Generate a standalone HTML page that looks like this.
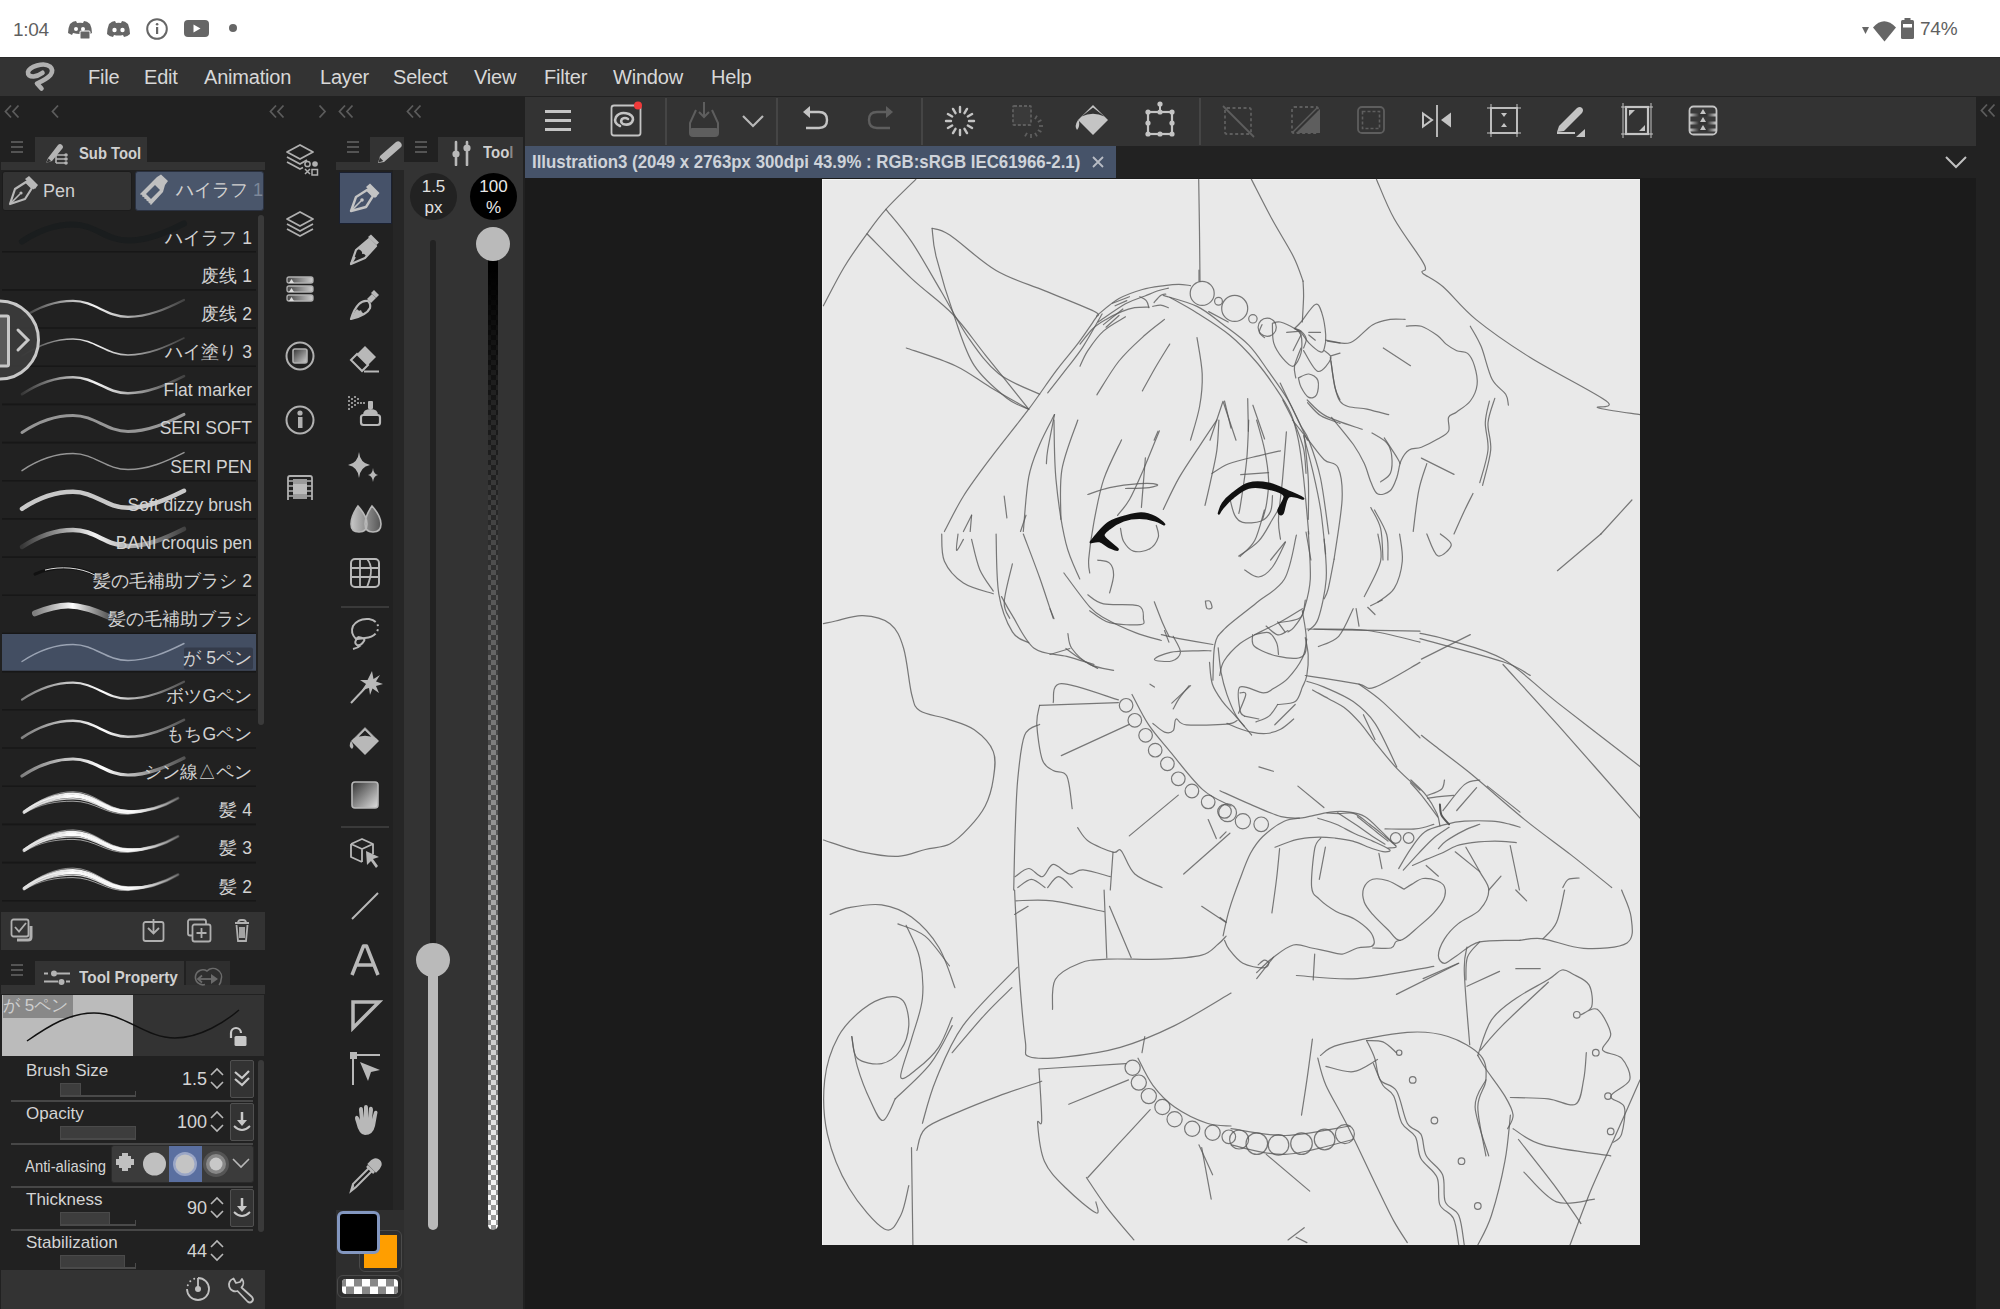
<!DOCTYPE html>
<html><head><meta charset="utf-8">
<style>
*{margin:0;padding:0;box-sizing:border-box}
html,body{width:2000px;height:1309px;overflow:hidden;background:#222;font-family:"Liberation Sans",sans-serif}
.a{position:absolute}
#status{left:0;top:0;width:2000px;height:57px;background:#fff}
#menu{left:0;top:57px;width:2000px;height:39px;background:#333;border-top:1px solid #2a2a2a}
.mi{position:absolute;font-size:20px;line-height:24px;color:#d8d8d8;letter-spacing:-0.2px}
#lp{left:0;top:96px;width:525px;height:1213px;background:#212121}
#canvasarea{left:525px;top:178px;width:1451px;height:1131px;background:#1b1b1b}
#paper{left:822px;top:179px;width:818px;height:1066px;background:#e9e9e9;border-top:1px solid #f3f3f3;border-left:1px solid #f3f3f3}
#toolbar{left:525px;top:97px;width:1451px;height:49px;background:#333}
#tabrow{left:525px;top:146px;width:1451px;height:32px;background:#222}
#tab{left:525px;top:146px;width:591px;height:32px;background:#465369}
#rstrip{left:1976px;top:96px;width:24px;height:1213px;background:#222}
.ic{position:absolute;fill:none;stroke:#b4b4b4;stroke-width:2}
</style></head><body><div class="a" id="status"></div>
<div class="a" id="menu"></div>
<div class="a" id="lp"></div>
<div class="a" id="canvasarea"></div>
<div class="a" id="toolbar"></div>
<div class="a" id="tabrow"></div>
<div class="a" id="tab"></div>
<div class="a" id="rstrip"></div>
<div class="a" id="paper"></div>

<!-- STATUS BAR -->
<div class="a" style="left:13px;top:18px;font-size:19px;color:#5f5f5f;line-height:24px;letter-spacing:-0.3px">1:04</div>
<svg class="a" style="left:66px;top:18px" width="30" height="24" viewBox="0 0 30 24">
 <path d="M4 6 Q7 3 10 3 L11 5 Q14 4.5 17 5 L18 3 Q21 3 24 6 Q26 10 26 15 L22 17 L21 15 Q14 17 7 15 L6 17 L2 15 Q2 10 4 6Z" fill="#666"/>
 <circle cx="10" cy="11" r="2" fill="#fff"/><circle cx="17" cy="11" r="2" fill="#fff"/>
 <rect x="14" y="13" width="10" height="8" rx="1" fill="#666" stroke="#fff" stroke-width="1"/>
</svg>
<svg class="a" style="left:106px;top:20px" width="25" height="19" viewBox="0 0 25 19">
 <path d="M3 4 Q6 1 9 1 L10 3 Q12.5 2.6 15 3 L16 1 Q19 1 22 4 Q24 9 24 14 Q21 17 18 17 L17 15 Q12.5 16 8 15 L7 17 Q4 17 1 14 Q1 9 3 4Z" fill="#666"/>
 <circle cx="8.5" cy="10" r="2.2" fill="#fff"/><circle cx="16.5" cy="10" r="2.2" fill="#fff"/>
</svg>
<svg class="a" style="left:145px;top:17px" width="24" height="24" viewBox="0 0 24 24">
 <circle cx="12" cy="12" r="9.8" fill="none" stroke="#666" stroke-width="2"/>
 <rect x="11" y="10" width="2.2" height="7" fill="#666"/><circle cx="12.1" cy="7.2" r="1.3" fill="#666"/>
</svg>
<svg class="a" style="left:183px;top:19px" width="28" height="20" viewBox="0 0 28 20">
 <rect x="1" y="1" width="25" height="17" rx="4" fill="#666"/><path d="M10.5 5.5 L17.5 9.5 L10.5 13.5Z" fill="#fff"/>
</svg>
<div class="a" style="left:229px;top:24px;width:8px;height:8px;border-radius:50%;background:#666"></div>
<svg class="a" style="left:1860px;top:16px" width="100" height="26" viewBox="0 0 100 26">
 <path d="M2 11 L9 11 L5.5 18Z" fill="#666"/>
 <path d="M13 11.5 Q24 -1 36 11.5 L24.5 25.5Z" fill="#666"/>
 <rect x="41" y="4" width="13" height="19" rx="1.5" fill="#666"/><rect x="44.5" y="2" width="6" height="3" fill="#666"/>
 <rect x="43" y="8" width="9" height="3.5" fill="#fff"/>
</svg>
<div class="a" style="left:1920px;top:17px;font-size:19px;color:#5f5f5f;line-height:24px;letter-spacing:-0.2px">74%</div>

<!-- MENU -->
<svg class="a" style="left:0px;top:40px" width="70" height="60" viewBox="0 40 70 60">
 <path d="M41.5 88.5 L37 83.5 Q 47 79 50.5 75 Q 54 70 50 66.5 Q 45.5 63 37 65.5 Q 29 68 28 72 Q 27.5 76.5 33.5 76.5 Q 38 76 42.5 72.8" fill="none" stroke="#b0b0b0" stroke-width="4.6" stroke-linecap="round" stroke-linejoin="round"/>
</svg>
<div class="mi" style="left:88px;top:65px">File</div>
<div class="mi" style="left:144px;top:65px">Edit</div>
<div class="mi" style="left:204px;top:65px">Animation</div>
<div class="mi" style="left:320px;top:65px">Layer</div>
<div class="mi" style="left:393px;top:65px">Select</div>
<div class="mi" style="left:474px;top:65px">View</div>
<div class="mi" style="left:544px;top:65px">Filter</div>
<div class="mi" style="left:613px;top:65px">Window</div>
<div class="mi" style="left:711px;top:65px">Help</div>
<svg class="a" style="left:3.5px;top:104px" width="18" height="16" viewBox="0 0 18 16"><path d="M7 1.5 L1.5 7.5 L7 13.5 M14.5 1.5 L9 7.5 L14.5 13.5" fill="none" stroke="#5c5c5c" stroke-width="1.8"/></svg>
<svg class="a" style="left:51px;top:104px" width="10" height="16" viewBox="0 0 10 16"><path d="M7 1.5 L1.5 7.5 L7 13.5" fill="none" stroke="#5c5c5c" stroke-width="1.8"/></svg>
<svg class="a" style="left:269px;top:104px" width="18" height="16" viewBox="0 0 18 16"><path d="M7 1.5 L1.5 7.5 L7 13.5 M14.5 1.5 L9 7.5 L14.5 13.5" fill="none" stroke="#5c5c5c" stroke-width="1.8"/></svg>
<svg class="a" style="left:318px;top:104px" width="10" height="16" viewBox="0 0 10 16"><path d="M1.5 1.5 L7 7.5 L1.5 13.5" fill="none" stroke="#5c5c5c" stroke-width="1.8"/></svg>
<svg class="a" style="left:338px;top:104px" width="18" height="16" viewBox="0 0 18 16"><path d="M7 1.5 L1.5 7.5 L7 13.5 M14.5 1.5 L9 7.5 L14.5 13.5" fill="none" stroke="#5c5c5c" stroke-width="1.8"/></svg>
<svg class="a" style="left:406px;top:104px" width="18" height="16" viewBox="0 0 18 16"><path d="M7 1.5 L1.5 7.5 L7 13.5 M14.5 1.5 L9 7.5 L14.5 13.5" fill="none" stroke="#5c5c5c" stroke-width="1.8"/></svg>
<div class="a" style="left:35px;top:137px;width:112px;height:25px;background:#333"></div>
<div class="a" style="left:1px;top:162px;width:264px;height:8px;background:#333"></div>
<svg class="a" style="left:10px;top:140px" width="14" height="14" viewBox="0 0 14 14"><path d="M1 2h12M1 7h12M1 12h12" stroke="#666" stroke-width="1.4"/></svg>
<svg class="a" style="left:44px;top:141px" width="28" height="25" viewBox="0 0 28 25"><path d="M2 22 L4 17 L14 4 Q16 2 18 4 Q20 6 18 8 L8 20Z" fill="#b4b4b4"/><path d="M2 22 L4.5 17.5 L7 20Z" fill="#333"/><path d="M12 14 h10 M12 18 h10 M12 22 h10 M12 14 v8" stroke="#b4b4b4" stroke-width="1.6" fill="none"/><circle cx="22" cy="14" r="1.8" fill="#b4b4b4"/><circle cx="22" cy="18" r="1.8" fill="#b4b4b4"/><circle cx="22" cy="22" r="1.8" fill="#b4b4b4"/></svg>
<div class="a" style="left:79px;top:144px;font-size:17px;font-weight:700;color:#d0d0d0;line-height:20px;transform:scaleX(0.87);transform-origin:left">Sub Tool</div>
<div class="a" style="left:2px;top:171px;width:130px;height:40px;background:#333;border:1px solid #1c1c1c;border-radius:3px"></div>
<div class="a" style="left:135px;top:171px;width:129px;height:40px;background:#4a566b;border:1px solid #2a3140;border-radius:3px"></div>
<svg class="a" style="left:7px;top:175px" width="32.0" height="32.0" viewBox="0 0 32 32"><path d="M3 29 L8 14 L19 7 L25 13 L18 24Z" fill="none" stroke="#b8b8b8" stroke-width="2.2" stroke-linejoin="round"/><path d="M18 4 L22 1 L31 10 L28 14Z" fill="#b8b8b8"/><path d="M19.5 5.5 L27.5 13.5" stroke="#b8b8b8" stroke-width="3"/><path d="M4 28 L13 19" stroke="#b8b8b8" stroke-width="1.6"/><circle cx="14" cy="18" r="1.6" fill="#b8b8b8"/></svg>
<div class="a" style="left:43px;top:180px;font-size:18px;color:#d0d0d0;line-height:22px">Pen</div>
<svg class="a" style="left:137px;top:174px" width="34" height="34" viewBox="0 0 34 34"><path d="M20 3 L24 0.5 L31 7 L28 11 L26 18 L14 31 L3 20 L16 7Z" fill="#c0c0c0"/><path d="M9 20 L18 11 L23 16 L14 25Z" fill="#4a566b"/><path d="M4 21 L13 30" stroke="#4a566b" stroke-width="1.2" stroke-dasharray="1.5 1.5"/></svg>
<div class="a" style="left:176px;top:178px;font-size:18px;color:#d0d0d0;line-height:24px;white-space:nowrap">ハイラフ <span style="color:#7c8799">1</span></div>
<svg class="a" style="left:0;top:0" width="270" height="960" viewBox="0 0 270 960">
<defs><linearGradient id="gw" x1="0" x2="1"><stop offset="0" stop-color="#fff" stop-opacity="0.1"/><stop offset="0.45" stop-color="#fff" stop-opacity="0.95"/><stop offset="1" stop-color="#fff" stop-opacity="0.15"/></linearGradient><linearGradient id="gw2" x1="0" x2="1"><stop offset="0" stop-color="#ddd" stop-opacity="0.5"/><stop offset="0.5" stop-color="#fff" stop-opacity="1"/><stop offset="1" stop-color="#ccc" stop-opacity="0.3"/></linearGradient><linearGradient id="gw3" x1="0" x2="1"><stop offset="0" stop-color="#fff" stop-opacity="0.6"/><stop offset="0.3" stop-color="#fff" stop-opacity="1"/><stop offset="0.7" stop-color="#fff" stop-opacity="0.9"/><stop offset="1" stop-color="#aaa" stop-opacity="0.2"/></linearGradient></defs>
<line x1="2" y1="251.7" x2="256" y2="251.7" stroke="#171717" stroke-width="1.6"/>
<path d="M22 241.5 C 40 229.5, 56 224.5, 73 224.5 C 95 224.5, 106 240.5, 128 240.5 C 148 240.5, 166 232.5, 184 223.5" fill="none" stroke="#1a1d1e" stroke-width="6" stroke-linecap="round"/>
<line x1="2" y1="289.9" x2="256" y2="289.9" stroke="#171717" stroke-width="1.6"/>
<line x1="2" y1="328.0" x2="256" y2="328.0" stroke="#171717" stroke-width="1.6"/>
<path d="M22 317.9 C 40 305.9, 56 300.9, 73 300.9 C 95 300.9, 106 316.9, 128 316.9 C 148 316.9, 166 308.9, 184 299.9" fill="none" stroke="url(#gw)" stroke-width="2.2" stroke-linecap="round"/>
<line x1="2" y1="366.2" x2="256" y2="366.2" stroke="#171717" stroke-width="1.6"/>
<path d="M22 356.0 C 40 344.0, 56 339.0, 73 339.0 C 95 339.0, 106 355.0, 128 355.0 C 148 355.0, 166 347.0, 184 338.0" fill="none" stroke="url(#gw)" stroke-width="1.6" stroke-linecap="round"/>
<line x1="2" y1="404.4" x2="256" y2="404.4" stroke="#171717" stroke-width="1.6"/>
<path d="M22 394.2 C 40 382.2, 56 377.2, 73 377.2 C 95 377.2, 106 393.2, 128 393.2 C 148 393.2, 166 385.2, 184 376.2" fill="none" stroke="url(#gw)" stroke-width="2.6" stroke-linecap="round"/>
<line x1="2" y1="442.6" x2="256" y2="442.6" stroke="#171717" stroke-width="1.6"/>
<path d="M22 432.4 C 40 420.4, 56 415.4, 73 415.4 C 95 415.4, 106 431.4, 128 431.4 C 148 431.4, 166 423.4, 184 414.4" fill="none" stroke="#aaa" stroke-opacity="0.85" stroke-width="3" stroke-linecap="round"/>
<line x1="2" y1="480.8" x2="256" y2="480.8" stroke="#171717" stroke-width="1.6"/>
<path d="M22 470.6 C 40 458.6, 56 453.6, 73 453.6 C 95 453.6, 106 469.6, 128 469.6 C 148 469.6, 166 461.6, 184 452.6" fill="none" stroke="#aaa" stroke-opacity="0.85" stroke-width="1.5" stroke-linecap="round"/>
<line x1="2" y1="518.9" x2="256" y2="518.9" stroke="#171717" stroke-width="1.6"/>
<path d="M22 508.8 C 40 496.8, 56 491.8, 73 491.8 C 95 491.8, 106 507.8, 128 507.8 C 148 507.8, 166 499.8, 184 490.8" fill="none" stroke="#c8c8c8" stroke-width="4.5" stroke-linecap="round"/>
<line x1="2" y1="557.1" x2="256" y2="557.1" stroke="#171717" stroke-width="1.6"/>
<path d="M22 546.9 C 40 534.9, 56 529.9, 73 529.9 C 95 529.9, 106 545.9, 128 545.9 C 148 545.9, 166 537.9, 184 528.9" fill="none" stroke="url(#gw)" stroke-width="4.5" stroke-linecap="round"/>
<line x1="2" y1="595.3" x2="256" y2="595.3" stroke="#171717" stroke-width="1.6"/>
<path d="M35 574.1 C 55 565.1, 80 566.1, 100 577.1" fill="none" stroke="#111" stroke-width="3" stroke-linecap="round"/><path d="M45 570.1 C 60 566.1, 80 567.1, 95 575.1" fill="none" stroke="#ddd" stroke-width="1" />
<line x1="2" y1="633.5" x2="256" y2="633.5" stroke="#171717" stroke-width="1.6"/>
<path d="M35 613.3 C 60 603.3, 75 601.3, 110 617.3" fill="none" stroke="url(#gw2)" stroke-width="6" stroke-linecap="round"/>
<rect x="2" y="634.0" width="254" height="36.7" fill="#434e62"/>
<rect x="184" y="647.5" width="69" height="22" rx="2" fill="#343b4a"/>
<line x1="2" y1="671.7" x2="256" y2="671.7" stroke="#171717" stroke-width="1.6"/>
<path d="M22 661.5 C 40 649.5, 56 644.5, 73 644.5 C 95 644.5, 106 660.5, 128 660.5 C 148 660.5, 166 652.5, 184 643.5" fill="none" stroke="#9aa3b3" stroke-width="1.4" stroke-linecap="round"/>
<line x1="2" y1="709.8" x2="256" y2="709.8" stroke="#171717" stroke-width="1.6"/>
<path d="M22 699.7 C 40 687.7, 56 682.7, 73 682.7 C 95 682.7, 106 698.7, 128 698.7 C 148 698.7, 166 690.7, 184 681.7" fill="none" stroke="url(#gw2)" stroke-width="2.2" stroke-linecap="round"/>
<line x1="2" y1="748.0" x2="256" y2="748.0" stroke="#171717" stroke-width="1.6"/>
<path d="M22 737.8 C 40 725.8, 56 720.8, 73 720.8 C 95 720.8, 106 736.8, 128 736.8 C 148 736.8, 166 728.8, 184 719.8" fill="none" stroke="url(#gw2)" stroke-width="2.6" stroke-linecap="round"/>
<line x1="2" y1="786.2" x2="256" y2="786.2" stroke="#171717" stroke-width="1.6"/>
<path d="M22 776.0 C 40 764.0, 56 759.0, 73 759.0 C 95 759.0, 106 775.0, 128 775.0 C 148 775.0, 166 767.0, 184 758.0" fill="none" stroke="url(#gw2)" stroke-width="3.2" stroke-linecap="round"/>
<line x1="2" y1="824.4" x2="256" y2="824.4" stroke="#171717" stroke-width="1.6"/>
<path d="M24 811.5 C 40 800.0, 56 793.7, 73 793.7 C 95 793.7, 106 810.7, 128 811.2 C 148 812.2, 166 805.2, 178 798.2" fill="none" stroke="url(#gw3)" stroke-opacity="0.95" stroke-width="2.2" stroke-linecap="round"/>
<path d="M24 812.2 C 40 801.2, 56 796.2, 73 796.2 C 95 796.2, 106 812.2, 128 812.2 C 148 812.2, 166 805.2, 178 798.2" fill="none" stroke="url(#gw3)" stroke-opacity="1.0" stroke-width="3.2" stroke-linecap="round"/>
<path d="M24 813.0 C 40 802.5, 56 798.7, 73 798.7 C 95 798.7, 106 813.7, 128 813.2 C 148 812.2, 166 805.2, 178 798.2" fill="none" stroke="url(#gw3)" stroke-opacity="0.8" stroke-width="1.4" stroke-linecap="round"/>
<path d="M24 813.7 C 40 803.7, 56 801.2, 73 801.2 C 95 801.2, 106 815.2, 128 814.2 C 148 812.2, 166 805.2, 178 798.2" fill="none" stroke="url(#gw3)" stroke-opacity="0.6" stroke-width="1.0" stroke-linecap="round"/>
<path d="M24 810.9 C 40 799.0, 56 791.7, 73 791.7 C 95 791.7, 106 809.5, 128 810.4 C 148 812.2, 166 805.2, 178 798.2" fill="none" stroke="url(#gw3)" stroke-opacity="0.5" stroke-width="1.0" stroke-linecap="round"/>
<line x1="2" y1="862.6" x2="256" y2="862.6" stroke="#171717" stroke-width="1.6"/>
<path d="M24 849.6 C 40 838.1, 56 831.9, 73 831.9 C 95 831.9, 106 848.9, 128 849.4 C 148 850.4, 166 843.4, 178 836.4" fill="none" stroke="url(#gw3)" stroke-opacity="0.95" stroke-width="2.2" stroke-linecap="round"/>
<path d="M24 850.4 C 40 839.4, 56 834.4, 73 834.4 C 95 834.4, 106 850.4, 128 850.4 C 148 850.4, 166 843.4, 178 836.4" fill="none" stroke="url(#gw3)" stroke-opacity="1.0" stroke-width="3.2" stroke-linecap="round"/>
<path d="M24 851.1 C 40 840.6, 56 836.9, 73 836.9 C 95 836.9, 106 851.9, 128 851.4 C 148 850.4, 166 843.4, 178 836.4" fill="none" stroke="url(#gw3)" stroke-opacity="0.8" stroke-width="1.4" stroke-linecap="round"/>
<path d="M24 851.9 C 40 841.9, 56 839.4, 73 839.4 C 95 839.4, 106 853.4, 128 852.4 C 148 850.4, 166 843.4, 178 836.4" fill="none" stroke="url(#gw3)" stroke-opacity="0.6" stroke-width="1.0" stroke-linecap="round"/>
<path d="M24 849.0 C 40 837.1, 56 829.9, 73 829.9 C 95 829.9, 106 847.7, 128 848.6 C 148 850.4, 166 843.4, 178 836.4" fill="none" stroke="url(#gw3)" stroke-opacity="0.5" stroke-width="1.0" stroke-linecap="round"/>
<line x1="2" y1="900.7" x2="256" y2="900.7" stroke="#171717" stroke-width="1.6"/>
<path d="M24 887.8 C 40 876.3, 56 870.1, 73 870.1 C 95 870.1, 106 887.1, 128 887.6 C 148 888.6, 166 881.6, 178 874.6" fill="none" stroke="url(#gw3)" stroke-opacity="0.95" stroke-width="2.2" stroke-linecap="round"/>
<path d="M24 888.6 C 40 877.6, 56 872.6, 73 872.6 C 95 872.6, 106 888.6, 128 888.6 C 148 888.6, 166 881.6, 178 874.6" fill="none" stroke="url(#gw3)" stroke-opacity="1.0" stroke-width="3.2" stroke-linecap="round"/>
<path d="M24 889.3 C 40 878.8, 56 875.1, 73 875.1 C 95 875.1, 106 890.1, 128 889.6 C 148 888.6, 166 881.6, 178 874.6" fill="none" stroke="url(#gw3)" stroke-opacity="0.8" stroke-width="1.4" stroke-linecap="round"/>
<path d="M24 890.1 C 40 880.1, 56 877.6, 73 877.6 C 95 877.6, 106 891.6, 128 890.6 C 148 888.6, 166 881.6, 178 874.6" fill="none" stroke="url(#gw3)" stroke-opacity="0.6" stroke-width="1.0" stroke-linecap="round"/>
<path d="M24 887.2 C 40 875.3, 56 868.1, 73 868.1 C 95 868.1, 106 885.9, 128 886.8 C 148 888.6, 166 881.6, 178 874.6" fill="none" stroke="url(#gw3)" stroke-opacity="0.5" stroke-width="1.0" stroke-linecap="round"/>
</svg>
<div class="a" style="left:0;top:226.5px;width:252px;text-align:right;font-size:17.5px;line-height:22px;color:#d2d2d2;white-space:nowrap">ハイラフ 1</div>
<div class="a" style="left:0;top:264.7px;width:252px;text-align:right;font-size:17.5px;line-height:22px;color:#d2d2d2;white-space:nowrap">废线 1</div>
<div class="a" style="left:0;top:302.9px;width:252px;text-align:right;font-size:17.5px;line-height:22px;color:#d2d2d2;white-space:nowrap">废线 2</div>
<div class="a" style="left:0;top:341.0px;width:252px;text-align:right;font-size:17.5px;line-height:22px;color:#d2d2d2;white-space:nowrap">ハイ塗り 3</div>
<div class="a" style="left:0;top:379.2px;width:252px;text-align:right;font-size:17.5px;line-height:22px;color:#d2d2d2;white-space:nowrap">Flat marker</div>
<div class="a" style="left:0;top:417.4px;width:252px;text-align:right;font-size:17.5px;line-height:22px;color:#d2d2d2;white-space:nowrap">SERI SOFT</div>
<div class="a" style="left:0;top:455.6px;width:252px;text-align:right;font-size:17.5px;line-height:22px;color:#d2d2d2;white-space:nowrap">SERI PEN</div>
<div class="a" style="left:0;top:493.8px;width:252px;text-align:right;font-size:17.5px;line-height:22px;color:#d2d2d2;white-space:nowrap">Soft dizzy brush</div>
<div class="a" style="left:0;top:531.9px;width:252px;text-align:right;font-size:17.5px;line-height:22px;color:#d2d2d2;white-space:nowrap">BANI croquis pen</div>
<div class="a" style="left:0;top:570.1px;width:252px;text-align:right;font-size:17.5px;line-height:22px;color:#d2d2d2;white-space:nowrap">髪の毛補助ブラシ 2</div>
<div class="a" style="left:0;top:608.3px;width:252px;text-align:right;font-size:17.5px;line-height:22px;color:#d2d2d2;white-space:nowrap">髪の毛補助ブラシ</div>
<div class="a" style="left:0;top:646.5px;width:252px;text-align:right;font-size:17.5px;line-height:22px;color:#d2d2d2;white-space:nowrap">が 5ペン</div>
<div class="a" style="left:0;top:684.7px;width:252px;text-align:right;font-size:17.5px;line-height:22px;color:#d2d2d2;white-space:nowrap">ボツGペン</div>
<div class="a" style="left:0;top:722.8px;width:252px;text-align:right;font-size:17.5px;line-height:22px;color:#d2d2d2;white-space:nowrap">もちGペン</div>
<div class="a" style="left:0;top:761.0px;width:252px;text-align:right;font-size:17.5px;line-height:22px;color:#d2d2d2;white-space:nowrap">シン線△ペン</div>
<div class="a" style="left:0;top:799.2px;width:252px;text-align:right;font-size:17.5px;line-height:22px;color:#d2d2d2;white-space:nowrap">髪 4</div>
<div class="a" style="left:0;top:837.4px;width:252px;text-align:right;font-size:17.5px;line-height:22px;color:#d2d2d2;white-space:nowrap">髪 3</div>
<div class="a" style="left:0;top:875.6px;width:252px;text-align:right;font-size:17.5px;line-height:22px;color:#d2d2d2;white-space:nowrap">髪 2</div>
<div class="a" style="left:258px;top:215px;width:6px;height:510px;background:#3a3a3a;border-radius:3px"></div>
<svg class="a" style="left:0;top:296px" width="48" height="88" viewBox="0 0 48 88"><circle cx="-0.5" cy="44" r="39" fill="#3c3c3c" fill-opacity="0.9" stroke="#c8c8c8" stroke-width="3"/><rect x="-6" y="20" width="14.5" height="50" rx="1.5" fill="#5a5a5a" stroke="#c8c8c8" stroke-width="3"/><path d="M18 34 L28 44 L18 54" fill="none" stroke="#c8c8c8" stroke-width="3" stroke-linecap="round"/></svg>
<div class="a" style="left:1px;top:912px;width:264px;height:38px;background:#333"></div>
<svg class="a" style="left:10px;top:918px" width="240" height="28" viewBox="0 0 240 28"><rect x="1.5" y="1.5" width="17" height="17" rx="2" fill="none" stroke="#b0b0b0" stroke-width="1.8"/><path d="M5 9 L9 13.5 L16 5" fill="none" stroke="#b0b0b0" stroke-width="1.8"/><path d="M21 8 v11 q0 3 -3 3 h-11" fill="none" stroke="#b0b0b0" stroke-width="3"/><rect x="133.5" y="4" width="20" height="19" rx="2" fill="none" stroke="#b0b0b0" stroke-width="1.8"/><path d="M143.5 1 V15 M138 10 L143.5 15.5 L149 10" fill="none" stroke="#b0b0b0" stroke-width="1.8"/><rect x="178" y="1.5" width="18" height="16" rx="2" fill="none" stroke="#b0b0b0" stroke-width="1.8"/><rect x="182.5" y="6.5" width="18" height="17" rx="2" fill="#333" stroke="#b0b0b0" stroke-width="1.8"/><path d="M191.5 10 v10 M186.5 15 h10" stroke="#b0b0b0" stroke-width="1.8"/><path d="M225 5 h14 M228 5 q0-3 3-3 h2 q3 0 3 3 M226.5 7 L228 23 h8 L237.5 7 M230 9 v11 M232 9 v11 M234 9 v11" fill="none" stroke="#b0b0b0" stroke-width="1.8"/></svg>
<svg class="a" style="left:10px;top:963px" width="14" height="14" viewBox="0 0 14 14"><path d="M1 2h12M1 7h12M1 12h12" stroke="#666" stroke-width="1.4"/></svg>
<div class="a" style="left:35px;top:961px;width:149px;height:24px;background:#333"></div>
<div class="a" style="left:186px;top:961px;width:44px;height:24px;background:#2e2e2e"></div>
<div class="a" style="left:1px;top:985px;width:264px;height:9px;background:#333"></div>
<svg class="a" style="left:42px;top:968px" width="30" height="20" viewBox="0 0 30 20"><path d="M2 5.5 h4 M15 5.5 h13 M2 13.5 h14 M24 13.5 h4" stroke="#b4b4b4" stroke-width="2"/><circle cx="12" cy="5.5" r="3" fill="#b4b4b4"/><circle cx="19.5" cy="14" r="3" fill="#b4b4b4"/></svg>
<div class="a" style="left:79px;top:968px;font-size:17px;font-weight:700;color:#d0d0d0;line-height:20px;transform:scaleX(0.905);transform-origin:left;white-space:nowrap">Tool Property</div>
<svg class="a" style="left:193px;top:966px" width="32" height="22" viewBox="0 0 32 22"><path d="M12 18.5 A7.5 7.5 0 1 1 14 5 A8.5 8.5 0 0 1 28 14 Q28 17 26 19" fill="none" stroke="#6a6a6a" stroke-width="1.6"/><path d="M6 13 H19" stroke="#6a6a6a" stroke-width="1.8"/><path d="M9 9.5 L5 13 L9 16.5" fill="none" stroke="#6a6a6a" stroke-width="1.8"/><path d="M18 8 L25 13 L18 18Z" fill="#6a6a6a"/></svg>
<div class="a" style="left:2px;top:995px;width:131px;height:61px;background:#bbb"></div>
<div class="a" style="left:133px;top:995px;width:131px;height:61px;background:#333"></div>
<div class="a" style="left:3px;top:995px;width:70px;height:23px;background:#888"></div>
<div class="a" style="left:3px;top:995px;font-size:17px;line-height:22px;color:#cfcfcf;white-space:nowrap">が 5ペン</div>
<svg class="a" style="left:0;top:990px" width="265" height="70" viewBox="0 0 265 70"><path d="M27 51 C 50 35, 70 23, 94 23 C 125 23, 145 48, 175 48 C 200 48, 225 32, 239 20" fill="none" stroke="#111" stroke-width="1.5"/></svg>
<svg class="a" style="left:227px;top:1025px" width="26" height="26" viewBox="0 0 26 26"><path d="M4 13 V8 A5 5 0 0 1 14 8" fill="none" stroke="#c8c8c8" stroke-width="2.2"/><rect x="7.5" y="11" width="12" height="10" rx="1.5" fill="#c8c8c8"/></svg>
<div class="a" style="left:26px;top:1061px;font-size:17px;line-height:20px;color:#d4d4d4;white-space:nowrap">Brush Size</div>
<div class="a" style="left:60px;top:1095px;width:76px;height:1.5px;background:#4a4a4a"></div><div class="a" style="left:134.5px;top:1091px;width:1.5px;height:5px;background:#4a4a4a"></div>
<div class="a" style="left:60px;top:1083px;width:21px;height:13px;background:#3d3d3d;border:1px solid #4a4a4a"></div>
<div class="a" style="left:150px;top:1068px;width:57px;text-align:right;font-size:18px;line-height:22px;color:#d4d4d4">1.5</div>
<svg class="a" style="left:209px;top:1067px" width="16" height="24" viewBox="0 0 16 24"><path d="M2 8 L8 2 L14 8 M2 15 L8 21 L14 15" fill="none" stroke="#b8b8b8" stroke-width="1.6"/></svg>
<div class="a" style="left:230px;top:1060px;width:24px;height:38px;background:#333;border:1px solid #505050;border-radius:2px"></div>
<svg class="a" style="left:232px;top:1067px" width="20" height="24" viewBox="0 0 20 24"><path d="M3 5 L10 11 L17 4 M3 12 L10 18 L17 11" fill="none" stroke="#c8c8c8" stroke-width="2.2"/></svg>
<div class="a" style="left:11px;top:1100px;width:242px;height:1.5px;background:#474747"></div>
<div class="a" style="left:26px;top:1104px;font-size:17px;line-height:20px;color:#d4d4d4;white-space:nowrap">Opacity</div>
<div class="a" style="left:60px;top:1138px;width:76px;height:1.5px;background:#4a4a4a"></div><div class="a" style="left:134.5px;top:1134px;width:1.5px;height:5px;background:#4a4a4a"></div>
<div class="a" style="left:60px;top:1126px;width:76px;height:13px;background:#3d3d3d;border:1px solid #4a4a4a"></div>
<div class="a" style="left:150px;top:1111px;width:57px;text-align:right;font-size:18px;line-height:22px;color:#d4d4d4">100</div>
<svg class="a" style="left:209px;top:1110px" width="16" height="24" viewBox="0 0 16 24"><path d="M2 8 L8 2 L14 8 M2 15 L8 21 L14 15" fill="none" stroke="#b8b8b8" stroke-width="1.6"/></svg>
<div class="a" style="left:230px;top:1103px;width:24px;height:38px;background:#333;border:1px solid #505050;border-radius:2px"></div>
<svg class="a" style="left:232px;top:1110px" width="20" height="24" viewBox="0 0 20 24"><path d="M10 2 V13" stroke="#c8c8c8" stroke-width="2.5"/><path d="M5 10 L10 16 L15 10Z" fill="#c8c8c8"/><path d="M2 16 Q10 24 18 16" fill="none" stroke="#c8c8c8" stroke-width="1.8"/></svg>
<div class="a" style="left:11px;top:1143px;width:242px;height:1.5px;background:#474747"></div>
<div class="a" style="left:25px;top:1157px;font-size:17px;line-height:20px;color:#d4d4d4;transform:scaleX(0.875);transform-origin:left;white-space:nowrap">Anti-aliasing</div>
<div class="a" style="left:111px;top:1145px;width:143px;height:38px;background:#3b3b3b;border:1px solid #2a2a2a;border-radius:3px"></div>
<div class="a" style="left:169px;top:1146px;width:33px;height:36px;background:#5a6fa0"></div>
<svg class="a" style="left:111px;top:1145px" width="143" height="38" viewBox="0 0 143 38"><path d="M11 8 h6 v3 h3 v3 h3 v6 h-3 v3 h-3 v3 h-6 v-3 h-3 v-3 h-3 v-6 h3 v-3 h3z" fill="#c0c0c0"/><circle cx="43.5" cy="19" r="11.5" fill="#c0c0c0"/><circle cx="74" cy="19" r="12" fill="#9aa6c6"/><circle cx="74" cy="19" r="9.5" fill="#c4c4c4"/><circle cx="105" cy="19" r="13" fill="#555"/><circle cx="105" cy="19" r="10" fill="#888"/><circle cx="105" cy="19" r="6.5" fill="#c8c8c8"/><path d="M122 14 L130 22 L138 14" fill="none" stroke="#b8b8b8" stroke-width="1.6"/></svg>
<div class="a" style="left:11px;top:1186px;width:242px;height:1.5px;background:#474747"></div>
<div class="a" style="left:26px;top:1190px;font-size:17px;line-height:20px;color:#d4d4d4;white-space:nowrap">Thickness</div>
<div class="a" style="left:60px;top:1224px;width:76px;height:1.5px;background:#4a4a4a"></div><div class="a" style="left:134.5px;top:1220px;width:1.5px;height:5px;background:#4a4a4a"></div>
<div class="a" style="left:60px;top:1212px;width:50px;height:13px;background:#3d3d3d;border:1px solid #4a4a4a"></div>
<div class="a" style="left:150px;top:1197px;width:57px;text-align:right;font-size:18px;line-height:22px;color:#d4d4d4">90</div>
<svg class="a" style="left:209px;top:1196px" width="16" height="24" viewBox="0 0 16 24"><path d="M2 8 L8 2 L14 8 M2 15 L8 21 L14 15" fill="none" stroke="#b8b8b8" stroke-width="1.6"/></svg>
<div class="a" style="left:230px;top:1189px;width:24px;height:38px;background:#333;border:1px solid #505050;border-radius:2px"></div>
<svg class="a" style="left:232px;top:1196px" width="20" height="24" viewBox="0 0 20 24"><path d="M10 2 V13" stroke="#c8c8c8" stroke-width="2.5"/><path d="M5 10 L10 16 L15 10Z" fill="#c8c8c8"/><path d="M2 16 Q10 24 18 16" fill="none" stroke="#c8c8c8" stroke-width="1.8"/></svg>
<div class="a" style="left:11px;top:1229px;width:242px;height:1.5px;background:#474747"></div>
<div class="a" style="left:26px;top:1233px;font-size:17px;line-height:20px;color:#d4d4d4;white-space:nowrap">Stabilization</div>
<div class="a" style="left:60px;top:1267px;width:76px;height:1.5px;background:#4a4a4a"></div><div class="a" style="left:134.5px;top:1263px;width:1.5px;height:5px;background:#4a4a4a"></div>
<div class="a" style="left:60px;top:1255px;width:65px;height:13px;background:#3d3d3d;border:1px solid #4a4a4a"></div>
<div class="a" style="left:150px;top:1240px;width:57px;text-align:right;font-size:18px;line-height:22px;color:#d4d4d4">44</div>
<svg class="a" style="left:209px;top:1239px" width="16" height="24" viewBox="0 0 16 24"><path d="M2 8 L8 2 L14 8 M2 15 L8 21 L14 15" fill="none" stroke="#b8b8b8" stroke-width="1.6"/></svg>
<div class="a" style="left:258px;top:1060px;width:6px;height:172px;background:#3a3a3a;border-radius:3px"></div>
<div class="a" style="left:1px;top:1270px;width:264px;height:39px;background:#333"></div>
<svg class="a" style="left:185px;top:1275px" width="72" height="30" viewBox="0 0 72 30"><path d="M13 3 A11 11 0 1 1 2 14" fill="none" stroke="#c0c0c0" stroke-width="1.8"/><path d="M13 3 V14" stroke="#c0c0c0" stroke-width="1.8"/><circle cx="13" cy="14" r="3" fill="#c0c0c0"/><circle cx="2.8" cy="10.2" r="1" fill="#c0c0c0"/><circle cx="5.3" cy="6.3" r="1" fill="#c0c0c0"/><circle cx="9.2" cy="3.8" r="1" fill="#c0c0c0"/><path d="M48.5 3.5 L51 8 L55 7 L57 4 A6.5 6.5 0 0 1 56.5 12.5 L67 22 Q69 24.5 67 26.5 Q65 28.5 62.5 26.5 L52.5 16 A6.5 6.5 0 0 1 48.5 3.5 Z" fill="none" stroke="#c0c0c0" stroke-width="1.8" stroke-linejoin="round"/></svg>
<svg class="a" style="left:280px;top:140px" width="40" height="360" viewBox="0 0 40 360"><path d="M20 5 L33 12 L20 19 L7 12Z M7 17 L20 24 L27 20 M7 22 L20 29 L23 27.5" fill="none" stroke="#b0b0b0" stroke-width="1.8" stroke-linejoin="round"/><circle cx="27.5" cy="24" r="2.6" fill="none" stroke="#b0b0b0" stroke-width="1.5"/><circle cx="35" cy="24" r="2.8" fill="#b0b0b0"/><path d="M25 29 l5 5 M30 29 l-5 5" stroke="#b0b0b0" stroke-width="1.5"/><rect x="32" y="29.5" width="5.5" height="5.5" fill="none" stroke="#b0b0b0" stroke-width="1.5"/><path d="M20 72 L33 79 L20 86 L7 79Z M7 84 L20 91 L33 84 M7 89 L20 96 L33 89" fill="none" stroke="#b0b0b0" stroke-width="1.8" stroke-linejoin="round"/><defs><linearGradient id="lg1" x1="0" x2="1"><stop offset="0" stop-color="#444"/><stop offset="1" stop-color="#ccc"/></linearGradient><linearGradient id="lg2" x1="0" y1="0" x2="1" y2="1"><stop offset="0" stop-color="#333"/><stop offset="1" stop-color="#d0d0d0"/></linearGradient></defs><rect x="7" y="137" width="26" height="6" rx="2" fill="url(#lg1)" stroke="#b0b0b0" stroke-width="1.3"/><rect x="7" y="146" width="26" height="6" rx="2" fill="url(#lg1)" stroke="#b0b0b0" stroke-width="1.3"/><rect x="7" y="155" width="26" height="6" rx="2" fill="url(#lg1)" stroke="#b0b0b0" stroke-width="1.3"/><path d="M9 143 l2.5-4 l2.5 4z M9 152 l2.5-4 l2.5 4z M9 161 l2.5-4 l2.5 4z" fill="#ddd"/><circle cx="20" cy="216" r="13.5" fill="none" stroke="#b0b0b0" stroke-width="2"/><rect x="13" y="209" width="14" height="14" rx="2" fill="url(#lg2)" stroke="#b0b0b0" stroke-width="1.6"/><circle cx="20" cy="280" r="13.5" fill="none" stroke="#b0b0b0" stroke-width="2"/><circle cx="20" cy="273" r="2.6" fill="#b0b0b0"/><rect x="18" y="277" width="4.5" height="11" fill="#b0b0b0"/><rect x="8" y="336" width="24" height="26" rx="2" fill="none" stroke="#b0b0b0" stroke-width="1.8"/><rect x="13" y="339" width="14" height="20" fill="#9a9a9a"/><rect x="13" y="344" width="14" height="10" fill="#bbb"/><path d="M8 341 h5 M8 346 h5 M8 351 h5 M8 356 h5 M27 341 h5 M27 346 h5 M27 351 h5 M27 356 h5" stroke="#b0b0b0" stroke-width="1.3"/></svg>
<div class="a" style="left:336px;top:170px;width:57px;height:1040px;background:#212121"></div>
<div class="a" style="left:393px;top:170px;width:11px;height:1040px;background:#262626"></div>
<svg class="a" style="left:346px;top:140px" width="14" height="14" viewBox="0 0 14 14"><path d="M1 2h12M1 7h12M1 12h12" stroke="#666" stroke-width="1.4"/></svg>
<div class="a" style="left:370px;top:137px;width:34px;height:25px;background:#333"></div>
<div class="a" style="left:336px;top:162px;width:68px;height:8px;background:#333"></div>
<svg class="a" style="left:376px;top:141px" width="28" height="24" viewBox="0 0 28 24"><path d="M2 22 L4 15 L20 1 Q23 -1 25 2 Q27 5 24 7 L8 21Z" fill="#b8b8b8"/><path d="M2.5 21.5 L3.8 16.5 L7.3 20Z" fill="#333"/></svg>
<div class="a" style="left:339px;top:172px;width:53px;height:52px;background:#465269;border:1px solid #1a2030"></div>
<svg class="a" style="left:345px;top:178px" width="40" height="40" viewBox="0 0 40 40"><path d="M6 33 L11 19 L22 12 L28 18 L21 29Z" fill="none" stroke="#c4c4c4" stroke-width="2.4" stroke-linejoin="round"/><path d="M21 9 L25 5.5 L34.5 15 L31 19Z" fill="#c4c4c4"/><path d="M22.5 10.5 L31 19" stroke="#c4c4c4" stroke-width="3"/><path d="M7 32 L16 23" stroke="#c4c4c4" stroke-width="1.6"/><circle cx="17" cy="22" r="1.8" fill="#c4c4c4"/></svg>
<svg class="a" style="left:345px;top:230px" width="40" height="40" viewBox="0 0 40 40"><path d="M6 34 L11 20 L24 9 L31 16 L20 28Z" fill="none" stroke="#b8b8b8" stroke-width="2.2" stroke-linejoin="round"/><path d="M13 19 L24 9 L31 16 L21 26 Q19 23 17 24 Q18 21 13 19Z" fill="#b8b8b8"/><path d="M23 7 L26 4.5 L34 12.5 L31.5 15Z" fill="#b8b8b8"/><path d="M6 34 L10 27" stroke="#b8b8b8" stroke-width="2"/></svg>
<svg class="a" style="left:345px;top:285px" width="40" height="40" viewBox="0 0 40 40"><path d="M6 34 Q9 24 14 19 Q18 15 23 16 Q26 19 25 23 Q22 30 6 34Z" fill="none" stroke="#b8b8b8" stroke-width="2.2" stroke-linejoin="round"/><path d="M6 34 Q9 27 12 24 Q14 27 16 25 Q17 29 19 28 Q14 32 6 34Z" fill="#b8b8b8"/><path d="M22 14 L27 9 L31 13 L26 18Z" fill="#b8b8b8"/><path d="M26 8 L29 5 L34 10 L31 13Z" fill="#b8b8b8"/></svg>
<svg class="a" style="left:343px;top:336px" width="40" height="40" viewBox="0 0 40 40"><path d="M8 24 L22 10 L33 21 L19 35Z" fill="#b8b8b8"/><path d="M8 24 L14 18 L25 29 L19 35Z" fill="#212121" stroke="#b8b8b8" stroke-width="2"/><path d="M21 35.5 H36" stroke="#b8b8b8" stroke-width="2"/></svg>
<svg class="a" style="left:344px;top:390px" width="40" height="40" viewBox="0 0 40 40"><rect x="17" y="25" width="19" height="10" rx="2.5" fill="none" stroke="#b8b8b8" stroke-width="2.2"/><path d="M19 25 Q19 19 26.5 19 Q34 19 34 25" fill="#b8b8b8"/><rect x="24" y="11" width="5" height="8" rx="1" fill="#b8b8b8"/><g fill="#b8b8b8"><circle cx="5" cy="7" r="1"/><circle cx="8" cy="9" r="1"/><circle cx="11" cy="11" r="1"/><circle cx="5" cy="11" r="1"/><circle cx="8" cy="13" r="1"/><circle cx="14" cy="13" r="1"/><circle cx="5" cy="15" r="1"/><circle cx="8" cy="17" r="1"/><circle cx="11" cy="15" r="1"/><circle cx="14" cy="9" r="1"/><circle cx="17" cy="13" r="1"/><circle cx="11" cy="7" r="1"/><circle cx="5" cy="19" r="1"/><circle cx="20" cy="13" r="1"/></g></svg>
<svg class="a" style="left:345px;top:446px" width="40" height="40" viewBox="0 0 40 40"><path d="M14 6 Q15 17 25 19 Q15 21 14 32 Q13 21 3 19 Q13 17 14 6Z" fill="#b8b8b8"/><path d="M28 22 Q28.5 28 33 29 Q28.5 30 28 36 Q27.5 30 23 29 Q27.5 28 28 22Z" fill="#b8b8b8"/></svg>
<svg class="a" style="left:345px;top:499px" width="40" height="40" viewBox="0 0 40 40"><defs><linearGradient id="bl" x1="0" x2="1"><stop offset="0" stop-color="#c8c8c8"/><stop offset="1" stop-color="#555"/></linearGradient></defs><path d="M13 7 Q22 17 22 25 Q22 33 14 33 Q6 33 6 25 Q6 17 13 7Z M27 7 Q36 17 36 25 Q36 33 28 33 Q20 33 20 25 Q20 17 27 7Z" fill="url(#bl)" stroke="#b8b8b8" stroke-width="1.6"/></svg>
<svg class="a" style="left:345px;top:553px" width="40" height="40" viewBox="0 0 40 40"><rect x="6" y="6" width="28" height="28" rx="4" fill="none" stroke="#b8b8b8" stroke-width="2"/><path d="M6 15 H34 M6 24 H34 M15 6 V34 M22 6 Q30 15 22 34" fill="none" stroke="#b8b8b8" stroke-width="1.8"/></svg>
<div class="a" style="left:341px;top:606px;width:48px;height:2px;background:#3a3a3a"></div>
<svg class="a" style="left:345px;top:613px" width="40" height="40" viewBox="0 0 40 40"><path d="M11 26 Q5 20 8 13 Q13 5 24 6 Q34 8 33 16 Q31 24 20 25 Q13 26 11 26" fill="none" stroke="#b8b8b8" stroke-width="2" stroke-dasharray="40 3 2 3 2 3"/><path d="M13 24 Q8 30 12 32 Q16 33 19 28 Q21 25 13 24 M8 36 Q13 35 16 32" fill="none" stroke="#b8b8b8" stroke-width="2"/></svg>
<svg class="a" style="left:345px;top:667px" width="40" height="40" viewBox="0 0 40 40"><path d="M6 36 L22 19" stroke="#b8b8b8" stroke-width="2"/><path d="M27 4 L28.5 12 L35 8 L31 14.5 L38 17 L31 19 L34 26 L27.5 21.5 L25 28 L24 21 L17 23 L21 17 L15 13 L22.5 13 Z" fill="#b8b8b8"/></svg>
<svg class="a" style="left:345px;top:721px" width="40" height="40" viewBox="0 0 40 40"><path d="M20 6 L34 20 L20 34 L6 20Z" fill="#b8b8b8"/><path d="M8.5 17.5 Q20 11 31.5 17.5 L20 6Z" fill="#212121"/><path d="M20 8 L30.5 18.5 Q20 13 9.5 18.5Z" fill="#212121" stroke="#b8b8b8" stroke-width="2"/><path d="M6 20 Q3 25 7 28 Q10 25 6 20" fill="#b8b8b8"/></svg>
<svg class="a" style="left:345px;top:775px" width="40" height="40" viewBox="0 0 40 40"><defs><linearGradient id="gr" x1="0" y1="0" x2="1" y2="1"><stop offset="0" stop-color="#333"/><stop offset="1" stop-color="#e0e0e0"/></linearGradient></defs><rect x="7" y="7" width="26" height="26" rx="3" fill="url(#gr)" stroke="#b8b8b8" stroke-width="1.6"/></svg>
<div class="a" style="left:341px;top:826px;width:48px;height:2px;background:#3a3a3a"></div>
<svg class="a" style="left:345px;top:832px" width="40" height="40" viewBox="0 0 40 40"><path d="M6 12 L17 7 L28 12 L28 22 M6 12 L6 25 L17 30 M6 12 L17 17 L28 12 M17 17 V30" fill="none" stroke="#b8b8b8" stroke-width="1.8" stroke-linejoin="round"/><path d="M21 19 L34 25 L28 27 L33 34 L31 36 L26 29 L22 33Z" fill="#b8b8b8"/></svg>
<svg class="a" style="left:345px;top:886px" width="40" height="40" viewBox="0 0 40 40"><path d="M7 33 L33 7" stroke="#b8b8b8" stroke-width="2"/></svg>
<svg class="a" style="left:345px;top:941px" width="40" height="40" viewBox="0 0 40 40"><path d="M7 34 L18.5 5 L21.5 5 L33 34 M11.5 24 H28.5" fill="none" stroke="#b8b8b8" stroke-width="3.5" stroke-linejoin="round"/></svg>
<svg class="a" style="left:345px;top:994px" width="40" height="40" viewBox="0 0 40 40"><path d="M8 34 L8 8 L34 8Z" fill="none" stroke="#b8b8b8" stroke-width="3.5" stroke-linejoin="miter"/></svg>
<svg class="a" style="left:345px;top:1048px" width="40" height="40" viewBox="0 0 40 40"><path d="M8 37 V7 M8 7 H35" stroke="#b8b8b8" stroke-width="2"/><rect x="5" y="4" width="7" height="7" fill="#b8b8b8"/><path d="M15 14 L35 22 L26 24 L23 33Z" fill="#b8b8b8"/></svg>
<svg class="a" style="left:345px;top:1101px" width="40" height="40" viewBox="0 0 40 40"><path d="M11 21 Q9 16 11 15 Q13 14 15 19 L14 9 Q14 6 16 6 Q18 6 18 9 L19 17 L19 6 Q19 4 21 4 Q23 4 23 7 L23 17 L24 7 Q25 5 27 6 Q28 7 28 9 L27 18 L29 11 Q30 9 32 10 Q33 11 32 14 L30 25 Q28 34 20 34 Q14 34 11 21Z" fill="#b8b8b8"/></svg>
<svg class="a" style="left:345px;top:1155px" width="40" height="40" viewBox="0 0 40 40"><path d="M6 36 L8 29 L24 13 L27 16 L11 32Z" fill="none" stroke="#b8b8b8" stroke-width="2"/><path d="M8 29 L9 33" stroke="#b8b8b8"/><path d="M22 11 L29 18 M24 9 Q30 2 34 6 Q38 10 31 16Z" fill="#b8b8b8" stroke="#b8b8b8" stroke-width="2.5"/></svg>
<div class="a" style="left:336px;top:1210px;width:68px;height:99px;background:#2e2e2e"></div>
<div class="a" style="left:359px;top:1230px;width:43px;height:42px;border:1.5px solid #4a4a4a;border-radius:6px;background:#2e2e2e"></div>
<div class="a" style="left:364px;top:1235px;width:33px;height:33px;background:#ff9e00"></div>
<div class="a" style="left:337px;top:1211px;width:43px;height:43px;border:3px solid #8397c0;border-radius:6px;background:#000"></div>
<div class="a" style="left:337px;top:1275px;width:65px;height:23px;border:1.5px solid #4a4a4a;border-radius:6px;background:#2e2e2e"></div>
<svg class="a" style="left:342px;top:1279px" width="56" height="15" viewBox="0 0 56 15"><defs><clipPath id="ckc"><rect x="0" y="0" width="56" height="15" rx="4"/></clipPath></defs><g clip-path="url(#ckc)"><rect x="0" y="0" width="56" height="15" fill="#fff"/><g fill="#888"><rect x="0" y="0" width="4" height="7.5"/><rect x="12" y="0" width="8" height="7.5"/><rect x="28" y="0" width="8" height="7.5"/><rect x="44" y="0" width="8" height="7.5"/><rect x="4" y="7.5" width="8" height="7.5"/><rect x="20" y="7.5" width="8" height="7.5"/><rect x="36" y="7.5" width="8" height="7.5"/><rect x="52" y="7.5" width="4" height="7.5"/></g></g></svg>
<div class="a" style="left:404px;top:162px;width:119px;height:1147px;background:#333"></div>
<svg class="a" style="left:414px;top:140px" width="14" height="14" viewBox="0 0 14 14"><path d="M1 2h12M1 7h12M1 12h12" stroke="#666" stroke-width="1.4"/></svg>
<div class="a" style="left:438px;top:137px;width:85px;height:25px;background:#333"></div>
<svg class="a" style="left:450px;top:140px" width="24" height="26" viewBox="0 0 24 26"><path d="M6 2 V10 M6 18 V25 M17 2 V4 M17 12 V25" stroke="#b8b8b8" stroke-width="2.6" stroke-linecap="round"/><circle cx="6" cy="14" r="3.6" fill="#b8b8b8"/><circle cx="17" cy="8" r="3.6" fill="#b8b8b8"/></svg>
<div class="a" style="left:483px;top:143px;font-size:17px;font-weight:700;color:#d0d0d0;line-height:20px;transform:scaleX(0.88);transform-origin:left;white-space:nowrap">Too<span style="color:#888">l</span></div>
<div class="a" style="left:410px;top:173px;width:47px;height:47px;border-radius:50%;background:#222"></div>
<div class="a" style="left:410px;top:176px;width:47px;text-align:center;font-size:17px;line-height:21px;color:#e0e0e0">1.5<br>px</div>
<div class="a" style="left:470px;top:173px;width:47px;height:47px;border-radius:50%;background:#000"></div>
<div class="a" style="left:470px;top:176px;width:47px;text-align:center;font-size:17px;line-height:21px;color:#e8e8e8">100<br>%</div>
<div class="a" style="left:430px;top:240px;width:6px;height:725px;background:#222;border-radius:3px"></div>
<div class="a" style="left:428px;top:960px;width:10px;height:270px;background:#bababa;border-radius:5px"></div>
<div class="a" style="left:416px;top:943px;width:34px;height:34px;border-radius:50%;background:#bababa"></div>
<svg class="a" style="left:486px;top:240px" width="14" height="992" viewBox="0 0 14 992"><defs><pattern id="ck" width="10" height="10" patternUnits="userSpaceOnUse"><rect width="10" height="10" fill="#fff"/><rect width="5" height="5" fill="#9a9a9a"/><rect x="5" y="5" width="5" height="5" fill="#9a9a9a"/></pattern><linearGradient id="fade" x1="0" y1="0" x2="0" y2="1"><stop offset="0" stop-color="#000" stop-opacity="1"/><stop offset="0.03" stop-color="#000" stop-opacity="1"/><stop offset="1" stop-color="#000" stop-opacity="0"/></linearGradient><clipPath id="rc"><rect x="2" y="0" width="10" height="990" rx="5"/></clipPath></defs><g clip-path="url(#rc)"><rect x="2" y="0" width="10" height="990" fill="url(#ck)"/><rect x="2" y="0" width="10" height="990" fill="url(#fade)"/></g></svg>
<div class="a" style="left:476px;top:227px;width:34px;height:34px;border-radius:50%;background:#bababa"></div>
<div class="a" style="left:665px;top:98px;width:1.5px;height:47px;background:#454545"></div>
<div class="a" style="left:776px;top:98px;width:1.5px;height:47px;background:#454545"></div>
<div class="a" style="left:921px;top:98px;width:1.5px;height:47px;background:#454545"></div>
<div class="a" style="left:1199px;top:98px;width:1.5px;height:47px;background:#454545"></div>
<svg class="a" style="left:536.0px;top:99.0px" width="44" height="44" viewBox="0 0 44 44"><path d="M9 12.5 H35 M9 21.5 H35 M9 30.5 H35" stroke="#c4c4c4" stroke-width="3.2"/></svg>
<svg class="a" style="left:603.0px;top:99.0px" width="44" height="44" viewBox="0 0 44 44"><rect x="8.5" y="6.5" width="29" height="30" rx="2.5" fill="none" stroke="#c4c4c4" stroke-width="1.8"/><path d="M17 27 Q10 24 13 18 Q17 12 26 15 Q32 18 29 23 Q26 27 20 25 Q17 23 19 20 Q22 18 25 20" fill="none" stroke="#c4c4c4" stroke-width="2.6" stroke-linecap="round"/><circle cx="35" cy="6.5" r="4" fill="#f03a3a"/></svg>
<svg class="a" style="left:682.0px;top:99.0px" width="44" height="44" viewBox="0 0 44 44"><path d="M22 3 V18 M17 13 L22 18 L27 13" fill="none" stroke="#5e5e5e" stroke-width="2"/><path d="M14 11 L8 24 V34 Q8 37 11 37 H33 Q36 37 36 34 V24 L30 11" fill="none" stroke="#5e5e5e" stroke-width="2"/><rect x="8" y="29" width="28" height="8" rx="2" fill="#5e5e5e"/></svg>
<svg class="a" style="left:731.0px;top:99.0px" width="44" height="44" viewBox="0 0 44 44"><path d="M12 17 L22 27 L32 17" fill="none" stroke="#b8b8b8" stroke-width="2.2"/></svg>
<svg class="a" style="left:793.0px;top:99.0px" width="44" height="44" viewBox="0 0 44 44"><path d="M10 13 L17 7 L17 19Z" fill="#c4c4c4"/><path d="M16 13 H26 Q34 13 34 21 Q34 29 26 29 H13" fill="none" stroke="#c4c4c4" stroke-width="2.4"/></svg>
<svg class="a" style="left:859.0px;top:99.0px" width="44" height="44" viewBox="0 0 44 44"><path d="M34 13 L27 7 L27 19Z" fill="#5e5e5e"/><path d="M28 13 H18 Q10 13 10 21 Q10 29 18 29 H31" fill="none" stroke="#5e5e5e" stroke-width="2.4"/></svg>
<svg class="a" style="left:938.0px;top:99.0px" width="44" height="44" viewBox="0 0 44 44"><path d="M31.0 22.0 L36.0 22.0" stroke="#c4c4c4" stroke-width="2.4" stroke-linecap="round"/><path d="M29.8 26.5 L34.1 29.0" stroke="#c4c4c4" stroke-width="2.4" stroke-linecap="round"/><path d="M26.5 29.8 L29.0 34.1" stroke="#c4c4c4" stroke-width="2.4" stroke-linecap="round"/><path d="M22.0 31.0 L22.0 36.0" stroke="#c4c4c4" stroke-width="2.4" stroke-linecap="round"/><path d="M17.5 29.8 L15.0 34.1" stroke="#c4c4c4" stroke-width="2.4" stroke-linecap="round"/><path d="M14.2 26.5 L9.9 29.0" stroke="#c4c4c4" stroke-width="2.4" stroke-linecap="round"/><path d="M13.0 22.0 L8.0 22.0" stroke="#c4c4c4" stroke-width="2.4" stroke-linecap="round"/><path d="M14.2 17.5 L9.9 15.0" stroke="#c4c4c4" stroke-width="2.4" stroke-linecap="round"/><path d="M17.5 14.2 L15.0 9.9" stroke="#c4c4c4" stroke-width="2.4" stroke-linecap="round"/><path d="M22.0 13.0 L22.0 8.0" stroke="#c4c4c4" stroke-width="2.4" stroke-linecap="round"/><path d="M26.5 14.2 L29.0 9.9" stroke="#c4c4c4" stroke-width="2.4" stroke-linecap="round"/><path d="M29.8 17.5 L34.1 15.0" stroke="#c4c4c4" stroke-width="2.4" stroke-linecap="round"/></svg>
<svg class="a" style="left:1005.0px;top:99.0px" width="44" height="44" viewBox="0 0 44 44"><rect x="8" y="7" width="18" height="19" rx="1" fill="#3a3a3a" stroke="#5e5e5e" stroke-width="1.8" stroke-dasharray="3 2"/><path d="M30.0 20.1 L32.0 16.6" stroke="#5e5e5e" stroke-width="1.8"/><path d="M32.9 23.0 L36.4 21.0" stroke="#5e5e5e" stroke-width="1.8"/><path d="M34.0 27.0 L38.0 27.0" stroke="#5e5e5e" stroke-width="1.8"/><path d="M32.9 31.0 L36.4 33.0" stroke="#5e5e5e" stroke-width="1.8"/><path d="M30.0 33.9 L32.0 37.4" stroke="#5e5e5e" stroke-width="1.8"/><path d="M26.0 35.0 L26.0 39.0" stroke="#5e5e5e" stroke-width="1.8"/><path d="M22.0 33.9 L20.0 37.4" stroke="#5e5e5e" stroke-width="1.8"/></svg>
<svg class="a" style="left:1071.0px;top:99.0px" width="44" height="44" viewBox="0 0 44 44"><path d="M22 6 L37 21 L22 36 L7 21Z" fill="#c4c4c4"/><path d="M10.5 17.5 Q22 12 33.5 17.5 L22 8.5Z" fill="#333"/><path d="M7 21 Q3 27 6 31 Q9 28 8 22" fill="#c4c4c4"/></svg>
<svg class="a" style="left:1138.0px;top:99.0px" width="44" height="44" viewBox="0 0 44 44"><rect x="10" y="13" width="24" height="22" fill="none" stroke="#c4c4c4" stroke-width="2.2"/><path d="M22 13 V5" stroke="#c4c4c4" stroke-width="2"/><circle cx="10" cy="13" r="2.6" fill="#c4c4c4"/><circle cx="22" cy="13" r="2.6" fill="#c4c4c4"/><circle cx="34" cy="13" r="2.6" fill="#c4c4c4"/><circle cx="10" cy="24" r="2.6" fill="#c4c4c4"/><circle cx="34" cy="24" r="2.6" fill="#c4c4c4"/><circle cx="10" cy="35" r="2.6" fill="#c4c4c4"/><circle cx="22" cy="35" r="2.6" fill="#c4c4c4"/><circle cx="34" cy="35" r="2.6" fill="#c4c4c4"/><circle cx="22" cy="5" r="2.6" fill="#c4c4c4"/></svg>
<svg class="a" style="left:1216.0px;top:99.0px" width="44" height="44" viewBox="0 0 44 44"><rect x="9" y="9" width="26" height="26" rx="2" fill="none" stroke="#5e5e5e" stroke-width="1.8" stroke-dasharray="3 2.5"/><path d="M7 7 L38 38" stroke="#5e5e5e" stroke-width="1.8"/></svg>
<svg class="a" style="left:1283.0px;top:99.0px" width="44" height="44" viewBox="0 0 44 44"><rect x="9" y="8" width="26" height="26" rx="2" fill="none" stroke="#5e5e5e" stroke-width="1.8" stroke-dasharray="3 2.5"/><path d="M37 10 L13 34 H37Z" fill="#5e5e5e"/><path d="M35 8 L9 34" stroke="#5e5e5e" stroke-width="1.5"/></svg>
<svg class="a" style="left:1349.0px;top:99.0px" width="44" height="44" viewBox="0 0 44 44"><rect x="9" y="8" width="26" height="26" rx="4" fill="none" stroke="#5e5e5e" stroke-width="1.8"/><rect x="13.5" y="12.5" width="17" height="17" fill="none" stroke="#5e5e5e" stroke-width="1.6" stroke-dasharray="3 2"/></svg>
<svg class="a" style="left:1415.0px;top:99.0px" width="44" height="44" viewBox="0 0 44 44"><path d="M22 6 V38" stroke="#c4c4c4" stroke-width="1.8"/><path d="M8 14.5 L17 21 L8 27.5Z" fill="none" stroke="#c4c4c4" stroke-width="2"/><path d="M36 13.5 L26 21 L36 28.5Z" fill="#c4c4c4"/></svg>
<svg class="a" style="left:1482.0px;top:99.0px" width="44" height="44" viewBox="0 0 44 44"><rect x="9" y="9" width="26" height="25" fill="none" stroke="#c4c4c4" stroke-width="1.8"/><path d="M5 9 H39 M5 34 H39 M9 5 V38 M35 5 V38" stroke="#c4c4c4" stroke-width="1"/><path d="M19 14 h6 l-3 4z M19 28 h6 l-3 -4z" fill="#c4c4c4"/></svg>
<svg class="a" style="left:1549.0px;top:99.0px" width="44" height="44" viewBox="0 0 44 44"><path d="M8 33 L10 27 L28 9 Q31 7 33 9 Q35 11 33 14 L15 32Z" fill="#c4c4c4"/><path d="M8 34 H26" stroke="#c4c4c4" stroke-width="2"/><path d="M27 38 L36 30 V38Z" fill="#c4c4c4"/></svg>
<svg class="a" style="left:1615.0px;top:99.0px" width="44" height="44" viewBox="0 0 44 44"><rect x="11" y="8" width="22" height="27" fill="none" stroke="#c4c4c4" stroke-width="2.2"/><path d="M6 8 H38 M6 35 H38 M8 4 V39 M36 4 V39" stroke="#c4c4c4" stroke-width="1"/><path d="M14 11 h6 l-6 6z M30 32 h-6 l6 -6z" fill="#c4c4c4"/></svg>
<svg class="a" style="left:1681.0px;top:99.0px" width="44" height="44" viewBox="0 0 44 44"><defs><linearGradient id="tbg" x1="0" x2="1"><stop offset="0" stop-color="#c4c4c4"/><stop offset="0.35" stop-color="#333"/><stop offset="0.65" stop-color="#333"/><stop offset="1" stop-color="#c4c4c4"/></linearGradient></defs><rect x="8.5" y="7.5" width="27" height="28" rx="4" fill="#3a3a3a" stroke="#c4c4c4" stroke-width="1.8"/><path d="M9 16 H35 M9 24 H35 M9 31 H35" stroke="url(#tbg)" stroke-width="3"/><path d="M19 15 h6 l-3 -5z M19 23 h6 l-3 -5z M19 31 h6 l-3 -5z" fill="#c4c4c4"/></svg>
<svg class="a" style="left:1980px;top:103px" width="18" height="16" viewBox="0 0 18 16"><path d="M7 1.5 L1.5 7.5 L7 13.5 M14.5 1.5 L9 7.5 L14.5 13.5" fill="none" stroke="#5c5c5c" stroke-width="1.8"/></svg>
<div class="a" style="left:532px;top:151px;font-size:19px;font-weight:700;color:#cfd3da;line-height:22px;transform:scaleX(0.886);transform-origin:left;white-space:nowrap">Illustration3 (2049 x 2763px 300dpi 43.9% : RGB:sRGB IEC61966-2.1)</div>
<svg class="a" style="left:1090px;top:154px" width="16" height="16" viewBox="0 0 16 16"><path d="M3 3 L13 13 M13 3 L3 13" stroke="#b8bcc4" stroke-width="1.8"/></svg>
<svg class="a" style="left:1944px;top:152px" width="24" height="20" viewBox="0 0 24 20"><path d="M2 5 L12 15 L22 5" fill="none" stroke="#c0c0c0" stroke-width="2"/></svg>
<svg class="a" style="left:822px;top:178px" width="818" height="1067" viewBox="822 178 818 1067"><g fill="none" stroke="#5a5a5a" stroke-width="1.2" stroke-linecap="round" stroke-linejoin="round" stroke-opacity="0.8"><path d="M915.8 179.4 C910.8 184.3 894.1 200.2 885.9 209.3 C877.8 218.3 873.9 224.0 866.9 233.8 C859.8 243.5 851.0 255.7 843.8 267.7 C836.5 279.8 826.8 299.5 823.4 305.8"/><path d="M866.9 233.8 C874.4 241.2 897.5 265.3 911.7 278.6 C926.0 292.0 940.3 301.3 952.5 314.0 C964.8 326.7 972.5 338.9 985.2 354.8 C997.9 370.6 1021.4 400.1 1028.7 409.2"/><path d="M885.9 209.3 C890.2 214.7 902.5 228.1 911.7 241.9 C921.0 255.7 932.1 276.1 941.7 292.2 C951.2 308.3 959.3 324.9 968.9 338.5 C978.4 352.1 987.0 364.5 998.8 373.8 C1010.6 383.1 1032.8 390.8 1039.6 394.2"/><path d="M932.1 228.3 C935.1 229.4 939.2 228.1 949.8 235.1 C960.5 242.1 980.2 261.2 996.1 270.5 C1011.9 279.8 1028.7 284.1 1045.0 290.9 C1061.3 297.7 1085.3 307.0 1094.0 311.3 C1102.6 315.6 1096.2 315.8 1096.7 316.7"/><path d="M932.1 228.3 C932.8 233.1 932.4 241.7 936.2 256.9 C940.1 272.1 948.9 301.3 955.3 319.4 C961.6 337.6 965.7 352.5 974.3 365.7 C982.9 378.8 997.9 391.0 1006.9 398.3 C1016.0 405.5 1025.1 407.4 1028.7 409.2"/><path d="M906.3 348.0 C914.5 350.9 941.2 359.1 955.3 365.7 C969.3 372.2 978.4 380.2 990.6 387.4 C1002.9 394.7 1022.3 405.5 1028.7 409.2"/><path d="M1096.7 316.7 C1093.5 321.2 1084.4 334.8 1077.6 343.9 C1070.8 353.0 1064.0 360.2 1055.9 371.1 C1047.7 382.0 1039.6 394.7 1028.7 409.2 C1017.8 423.7 1001.5 443.6 990.6 458.1 C979.7 472.6 971.1 484.0 963.4 496.2 C955.7 508.4 947.6 525.7 944.4 531.5"/><path d="M1102.1 314.0 C1098.9 319.4 1089.0 337.6 1083.1 346.6 C1077.2 355.7 1072.7 360.7 1066.8 368.4 C1060.9 376.1 1050.9 388.8 1047.7 392.8"/><path d="M1198.7 179.4 C1198.8 188.2 1199.3 215.4 1199.5 232.4 C1199.7 249.4 1199.9 273.2 1200.0 281.3"/><path d="M1054.5 414.6 C1052.0 419.6 1043.9 434.1 1039.6 444.5 C1035.3 454.9 1031.4 462.7 1028.7 477.2 C1026.0 491.7 1024.2 522.5 1023.3 531.5"/><path d="M1054.5 414.6 C1053.4 420.5 1049.1 441.8 1047.7 450.0 C1046.4 458.1 1046.6 461.3 1046.4 463.6"/><path d="M1224.5 401.0 L1231.0 428.2"/><path d="M971.6 515.2 L963.4 531.5"/><path d="M971.6 515.2 L970.2 531.5"/><path d="M1026.0 515.2 L1020.5 531.5"/><path d="M1004.2 496.2 L1006.9 518.0"/><path d="M1251.4 179.4 C1254.8 185.9 1264.8 205.9 1271.8 218.8 C1278.8 231.7 1288.3 246.4 1293.6 256.9 C1298.8 267.3 1301.5 277.3 1303.1 281.3"/><path d="M1376.5 179.4 C1379.4 185.9 1386.7 205.4 1394.2 218.8 C1401.7 232.2 1416.2 251.2 1421.4 259.6 C1426.6 268.0 1425.2 266.8 1425.5 269.1 C1425.7 271.4 1419.8 270.2 1422.7 273.2 C1425.7 276.1 1434.3 279.1 1443.1 286.8 C1452.0 294.5 1461.3 307.6 1475.8 319.4 C1490.3 331.2 1508.4 343.9 1530.2 357.5 C1551.9 371.1 1595.0 392.6 1606.3 401.0 C1617.6 409.4 1592.5 405.5 1598.1 407.8 C1603.8 410.1 1633.0 413.5 1640.0 414.6"/><path d="M1327.5 341.2 C1331.4 341.4 1343.2 345.3 1350.7 342.5 C1358.1 339.8 1365.8 328.7 1372.4 324.9 C1379.0 321.0 1384.7 320.3 1390.1 319.4 C1395.5 318.5 1402.6 319.4 1405.1 319.4"/><path d="M1470.3 326.2 C1472.1 329.6 1477.6 337.8 1481.2 346.6 C1484.8 355.5 1488.0 371.3 1492.1 379.3 C1496.2 387.2 1503.0 389.9 1505.7 394.2 C1508.4 398.5 1507.9 403.3 1508.4 405.1"/><path d="M1494.8 398.3 C1493.7 402.4 1488.7 414.2 1488.0 422.8 C1487.3 431.4 1491.6 439.5 1490.7 450.0 C1489.8 460.4 1483.9 479.4 1482.6 485.3"/><path d="M1473.0 493.5 C1471.7 496.2 1468.1 503.0 1464.9 509.8 C1461.7 516.5 1455.8 530.0 1454.0 534.0"/><path d="M1489.4 401.0 C1488.7 404.6 1485.5 414.6 1485.3 422.8 C1485.1 430.9 1488.9 440.0 1488.0 450.0 C1487.1 459.9 1481.2 477.2 1479.8 482.6"/><path d="M1406.4 326.2 C1408.9 326.2 1416.2 324.6 1421.4 326.2 C1426.6 327.8 1433.6 332.8 1437.7 335.7 C1441.8 338.7 1442.7 341.4 1445.8 343.9 C1449.0 346.4 1453.1 349.1 1456.7 350.7 C1460.4 352.3 1464.7 350.9 1467.6 353.4 C1470.6 355.9 1472.8 360.4 1474.4 365.7 C1476.0 370.9 1477.8 378.8 1477.1 384.7 C1476.4 390.6 1473.7 396.5 1470.3 401.0 C1466.9 405.5 1460.4 409.2 1456.7 411.9 C1453.1 414.6 1449.9 414.2 1448.6 417.3 C1447.2 420.5 1450.4 427.3 1448.6 430.9 C1446.8 434.5 1442.2 436.4 1437.7 439.1 C1433.2 441.8 1426.1 445.4 1421.4 447.2 C1416.6 449.1 1412.5 447.7 1409.1 450.0 C1405.7 452.2 1403.0 456.3 1401.0 460.8 C1398.9 465.4 1398.7 472.2 1396.9 477.2 C1395.1 482.1 1393.3 487.9 1390.1 490.8 C1386.9 493.6 1381.0 495.4 1377.9 494.0 C1374.7 492.7 1373.3 487.7 1371.1 482.6 C1368.8 477.5 1367.2 469.9 1364.3 463.6 C1361.3 457.2 1358.8 452.2 1353.4 444.5 C1347.9 436.8 1335.3 421.9 1331.6 417.3"/><path d="M1330.3 357.5 C1331.9 364.7 1333.7 392.4 1339.8 401.0 C1345.9 409.6 1358.8 406.9 1367.0 409.2 C1375.1 411.4 1385.1 413.7 1388.7 414.6"/><path d="M1383.3 348.0 L1410.5 365.7"/><path d="M1421.4 458.1 L1454.0 474.4"/><path d="M1426.8 463.6 C1425.5 468.1 1420.9 479.4 1418.7 490.8 C1416.4 502.1 1414.1 524.8 1413.2 531.5"/><path d="M1631.9 500.0 L1600.9 534.0"/><path d="M823.4 623.7 C825.4 623.3 829.0 622.4 835.6 621.0 C842.2 619.7 853.7 615.1 862.8 615.6 C871.9 616.0 883.2 618.3 890.0 623.7 C896.8 629.2 900.0 636.4 903.6 648.2 C907.2 660.0 909.0 684.0 911.7 694.5 C914.5 704.9 914.0 706.7 919.9 710.8 C925.8 714.9 938.0 715.8 947.1 718.9 C956.2 722.1 966.6 724.4 974.3 729.8 C982.0 735.3 990.2 743.4 993.3 751.6 C996.5 759.7 994.7 769.7 993.3 778.8 C992.0 787.8 989.3 797.8 985.2 806.0 C981.1 814.1 974.8 821.4 968.9 827.7 C963.0 834.1 957.1 840.4 949.8 844.0 C942.6 847.7 934.0 847.4 925.3 849.5 C916.7 851.5 908.6 855.8 898.1 856.3 C887.7 856.7 875.3 854.9 862.8 852.2 C850.3 849.5 829.9 842.0 823.4 840.0"/><path d="M941.7 534.0 C942.1 538.5 940.8 553.0 944.4 561.2 C948.0 569.4 955.3 577.5 963.4 583.0 C971.6 588.4 988.3 592.0 993.3 593.8"/><path d="M971.6 539.4 C972.9 544.4 976.1 560.7 979.7 569.4 C983.4 578.0 991.1 587.5 993.3 591.1"/><path d="M958.0 534.0 C957.8 536.7 955.7 549.4 956.6 550.3 C957.5 551.2 962.3 541.3 963.4 539.4"/><path d="M996.1 534.0 C996.5 544.0 996.1 577.5 998.8 593.8 C1001.5 610.1 1007.4 623.7 1012.4 631.9 C1017.4 640.1 1026.0 641.0 1028.7 642.8"/><path d="M1012.4 563.9 C1011.0 570.3 1004.7 592.9 1004.2 602.0 C1003.8 611.1 1008.7 615.6 1009.7 618.3"/><path d="M1023.3 534.0 C1026.0 541.3 1034.6 563.5 1039.6 577.5 C1044.6 591.6 1050.9 611.5 1053.2 618.3"/><path d="M1001.5 596.6 C1003.3 599.7 1006.9 607.0 1012.4 615.6 C1017.8 624.2 1025.1 641.4 1034.1 648.2 C1043.2 655.0 1056.8 653.7 1066.8 656.4 C1076.7 659.1 1089.4 663.2 1094.0 664.5"/><path d="M1053.2 702.6 C1054.5 699.4 1050.4 684.0 1061.3 683.6 C1072.2 683.1 1108.9 697.2 1118.4 699.9"/><path d="M1039.6 705.3 L1118.4 702.6"/><path d="M1039.6 705.3 C1039.1 708.5 1036.4 715.3 1036.8 724.4 C1037.3 733.4 1039.6 752.0 1042.3 759.7 C1045.0 767.4 1049.1 767.9 1053.2 770.6 C1057.2 773.3 1063.6 769.7 1066.8 776.0 C1069.9 782.4 1071.3 803.2 1072.2 808.7"/><path d="M1039.6 724.4 C1037.1 726.2 1028.2 726.2 1024.6 735.3 C1021.0 744.3 1019.4 762.4 1017.8 778.8 C1016.2 795.1 1015.8 814.6 1015.1 833.2 C1014.4 851.7 1014.0 880.5 1013.7 890.0"/><path d="M1061.3 755.6 L1129.3 724.4"/><path d="M1077.6 827.7 C1079.5 830.0 1082.6 837.2 1088.5 841.3 C1094.4 845.4 1107.6 850.6 1113.0 852.2 C1118.4 853.8 1117.5 847.2 1121.2 850.8 C1124.8 854.5 1128.0 867.8 1134.8 874.0 C1141.6 880.1 1157.4 885.3 1162.0 887.5"/><path d="M1113.0 852.2 L1110.3 890.0"/><path d="M1129.3 835.9 L1178.3 795.1"/><path d="M1183.7 874.0 L1229.9 833.2"/><path d="M1208.2 819.6 L1216.3 838.6"/><path d="M1132.0 694.5 C1134.8 699.4 1142.0 714.9 1148.4 724.4 C1154.7 733.9 1161.0 740.7 1170.1 751.6 C1179.2 762.4 1192.6 780.6 1202.7 789.6 C1212.9 798.7 1226.3 803.2 1231.0 806.0"/><path d="M1015.1 876.7 C1017.4 875.3 1024.2 868.5 1028.7 868.5 C1033.2 868.5 1038.2 877.4 1042.3 876.7 C1046.4 876.0 1048.6 864.9 1053.2 864.4 C1057.7 864.0 1064.5 873.0 1069.5 874.0 C1074.5 874.9 1076.3 869.4 1083.1 869.9 C1089.9 870.3 1105.7 875.5 1110.3 876.7"/><path d="M1017.8 887.5 C1020.1 886.2 1026.9 879.4 1031.4 879.4 C1035.9 879.4 1042.7 886.2 1045.0 887.5"/><path d="M1047.7 887.5 C1049.5 885.7 1054.5 876.7 1058.6 876.7 C1062.7 876.7 1069.9 885.7 1072.2 887.5"/><circle cx="1126.1" cy="705.3" r="6.8"/><circle cx="1134.8" cy="720.3" r="6.8"/><circle cx="1145.6" cy="735.3" r="6.8"/><circle cx="1155.2" cy="750.2" r="6.8"/><circle cx="1167.4" cy="763.8" r="6.8"/><circle cx="1178.3" cy="778.8" r="6.8"/><circle cx="1191.9" cy="791.0" r="6.8"/><circle cx="1208.2" cy="801.9" r="6.8"/><circle cx="1224.5" cy="811.4" r="6.8"/><path d="M1377.9 534.0 C1378.3 538.5 1382.8 550.8 1380.6 561.2 C1378.3 571.6 1367.0 590.7 1364.3 596.6"/><path d="M1399.6 534.0 C1400.1 538.5 1403.2 552.1 1402.3 561.2 C1401.4 570.3 1398.3 581.6 1394.2 588.4 C1390.1 595.2 1380.6 599.7 1377.9 602.0"/><path d="M1426.8 534.0 C1428.6 537.6 1433.6 553.9 1437.7 555.8 C1441.8 557.6 1450.8 548.5 1451.3 544.9 C1451.7 541.3 1442.2 535.8 1440.4 534.0"/><path d="M1600.9 534.0 L1557.4 570.7"/><path d="M1420.0 633.3 C1424.8 634.4 1434.7 635.8 1448.6 640.1 C1462.4 644.4 1484.8 648.7 1503.0 659.1 C1521.1 669.5 1534.5 684.7 1557.4 702.6 C1580.2 720.5 1626.2 755.9 1640.0 766.5"/><path d="M1420.0 638.7 C1433.8 642.6 1484.6 655.7 1503.0 661.8 C1521.3 667.9 1525.6 673.2 1530.2 675.4"/><path d="M1503.0 664.5 C1512.0 674.5 1534.5 698.8 1557.4 724.4 C1580.2 750.0 1626.2 802.6 1640.0 818.2"/><path d="M1470.3 634.6 L1421.4 659.1"/><path d="M1421.4 735.3 C1423.6 737.1 1426.8 739.8 1435.0 746.1 C1443.1 752.5 1455.4 761.1 1470.3 773.3 C1485.3 785.6 1507.9 806.0 1524.7 819.6 C1541.5 833.2 1556.4 843.6 1571.0 854.9 C1585.5 866.2 1604.9 882.1 1611.7 887.5"/><path d="M1410.5 782.8 C1412.3 784.9 1416.8 789.4 1421.4 795.1 C1425.9 800.7 1435.0 813.2 1437.7 816.8"/><path d="M1562.8 887.5 C1563.7 886.2 1565.5 881.0 1568.2 879.4 C1571.0 877.8 1577.3 878.3 1579.1 878.0"/><path d="M830.1 914.4 C833.3 913.3 840.5 909.2 849.1 907.6 C857.7 906.0 871.3 903.3 881.7 904.9 C892.1 906.5 902.0 910.1 911.5 917.1 C921.0 924.1 931.4 935.2 938.6 947.0 C945.9 958.7 952.2 980.9 954.9 987.6"/><path d="M897.9 923.9 C902.5 925.9 916.5 929.1 925.1 936.1 C933.7 943.1 945.4 961.0 949.5 965.9"/><path d="M906.1 925.3 C908.3 930.7 916.9 945.6 919.6 957.8 C922.4 970.0 923.7 984.9 922.4 998.5 C921.0 1012.1 915.1 1026.1 911.5 1039.2 C907.9 1052.3 899.8 1072.2 900.7 1077.1 C901.6 1082.1 910.6 1074.0 916.9 1069.0 C923.3 1064.0 932.7 1055.9 938.6 1047.3 C944.5 1038.7 949.9 1022.4 952.2 1017.5"/><path d="M851.8 1036.5 C852.7 1040.1 852.3 1053.6 857.3 1058.2 C862.2 1062.7 874.4 1064.9 881.7 1063.6 C888.9 1062.2 896.1 1056.4 900.7 1050.0 C905.2 1043.7 908.3 1033.7 908.8 1025.6 C909.2 1017.5 907.0 1005.9 903.4 1001.2 C899.8 996.5 893.9 995.8 887.1 997.1 C880.3 998.5 870.8 1002.8 862.7 1009.3 C854.5 1015.9 844.6 1024.7 838.3 1036.5 C831.9 1048.2 826.5 1063.6 824.7 1079.9 C822.9 1096.1 823.4 1116.0 827.4 1134.1 C831.5 1152.2 839.6 1172.5 849.1 1188.3 C858.6 1204.2 875.8 1224.5 884.4 1229.0 C893.0 1233.5 896.6 1222.7 900.7 1215.5 C904.7 1208.2 907.4 1190.6 908.8 1185.6"/><path d="M851.8 1036.5 C852.7 1041.4 854.1 1055.4 857.3 1066.3 C860.4 1077.1 866.5 1092.5 870.8 1101.6 C875.1 1110.6 879.0 1121.0 883.0 1120.5 C887.1 1120.1 893.2 1102.5 895.2 1098.8"/><path d="M895.2 1098.8 C901.1 1093.0 921.0 1075.8 930.5 1063.6 C940.0 1051.4 948.6 1031.9 952.2 1025.6"/><path d="M922.4 1123.3 C924.6 1116.0 929.1 1096.1 935.9 1079.9 C942.7 1063.6 949.5 1044.4 963.0 1025.6 C976.6 1006.9 1008.2 977.0 1017.3 967.3"/><path d="M952.2 1052.7 C957.6 1046.4 974.8 1025.6 984.7 1014.8 C994.7 1003.9 1007.3 992.2 1011.9 987.6"/><path d="M916.9 1150.4 C918.3 1146.8 918.3 1135.0 925.1 1128.7 C931.8 1122.3 945.4 1117.8 957.6 1112.4 C969.8 1107.0 984.3 1101.3 998.3 1096.1 C1012.3 1090.9 1034.5 1083.7 1041.7 1081.2"/><path d="M911.5 1147.7 L912.9 1245.0"/><path d="M1014.6 890.0 C1014.8 894.5 1015.0 901.3 1015.9 917.1 C1016.8 932.9 1018.4 964.1 1020.0 984.9 C1021.6 1005.7 1023.8 1029.9 1025.4 1041.9 C1027.0 1053.9 1022.7 1054.3 1029.5 1056.8 C1036.3 1059.3 1051.0 1058.4 1066.1 1056.8 C1081.2 1055.2 1102.3 1052.5 1120.3 1047.3 C1138.4 1042.1 1156.1 1034.7 1174.6 1025.6 C1193.0 1016.6 1221.6 998.5 1231.0 993.1"/><path d="M1015.9 900.8 C1022.0 900.8 1037.8 899.0 1052.5 900.8 C1067.2 902.7 1095.5 909.9 1104.1 911.7"/><path d="M1014.6 914.4 L1028.1 906.3"/><path d="M1104.1 890.0 L1106.8 957.8"/><path d="M1109.5 906.3 L1131.2 957.8"/><path d="M1052.5 1009.3 C1053.0 1004.4 1050.7 987.2 1055.3 979.5 C1059.8 971.8 1071.1 966.6 1079.7 963.2 C1088.3 959.8 1093.2 959.8 1106.8 959.2 C1120.3 958.5 1145.2 959.8 1161.0 959.2 C1176.9 958.5 1192.2 957.6 1201.7 955.1 C1211.2 952.6 1213.9 947.4 1218.0 944.2 C1222.1 941.1 1224.8 937.5 1226.1 936.1"/><path d="M1201.7 906.3 L1226.1 922.5"/><path d="M1144.8 1036.5 L1142.0 1052.7"/><path d="M1039.0 1069.0 L1125.8 1063.6"/><path d="M1039.0 1069.0 C1039.4 1077.6 1041.9 1111.5 1041.7 1120.5 C1041.5 1129.6 1037.2 1116.5 1037.6 1123.3 C1038.1 1130.0 1039.7 1150.4 1044.4 1161.2 C1049.1 1172.1 1057.5 1179.8 1066.1 1188.3 C1074.7 1196.9 1091.0 1210.5 1095.9 1212.8 C1100.9 1215.0 1095.9 1203.7 1095.9 1201.9"/><path d="M1068.8 1104.3 L1128.5 1079.9"/><path d="M1087.8 1177.5 C1092.8 1172.1 1107.2 1156.3 1117.6 1144.9 C1128.0 1133.6 1144.8 1115.6 1150.2 1109.7"/><path d="M1086.4 1177.5 C1089.8 1182.5 1098.9 1196.9 1106.8 1207.3 C1114.7 1217.7 1129.4 1234.5 1133.9 1239.9"/><path d="M1138.0 1058.2 C1140.5 1062.7 1146.8 1077.1 1152.9 1085.3 C1159.0 1093.4 1165.5 1100.7 1174.6 1107.0 C1183.6 1113.3 1197.7 1120.1 1207.1 1123.3 C1216.5 1126.4 1227.0 1125.5 1231.0 1126.0"/><path d="M1199.0 1144.9 L1212.6 1174.8"/><path d="M1201.7 1147.7 L1211.2 1199.2"/><circle cx="1132.6" cy="1067.7" r="7.6"/><circle cx="1138.8" cy="1082.6" r="7.6"/><circle cx="1148.8" cy="1096.1" r="7.6"/><circle cx="1162.4" cy="1107.0" r="7.6"/><circle cx="1174.6" cy="1119.2" r="7.6"/><circle cx="1192.2" cy="1128.7" r="7.6"/><circle cx="1212.6" cy="1132.7" r="7.6"/><circle cx="1228.8" cy="1136.8" r="6.8"/><path d="M1520.1 940.2 C1523.9 940.0 1532.3 937.5 1542.9 938.8 C1553.5 940.2 1569.6 947.6 1583.6 948.3 C1597.6 949.0 1619.1 948.1 1627.0 942.9 C1634.9 937.7 1632.0 925.9 1631.1 917.1 C1630.2 908.3 1623.1 894.5 1621.6 890.0"/><path d="M1542.9 938.8 C1545.2 936.1 1552.9 930.7 1556.5 922.5 C1560.1 914.4 1563.2 895.4 1564.6 890.0"/><path d="M1515.8 890.0 L1526.6 900.8"/><path d="M1396.4 994.4 L1458.8 963.2"/><path d="M1467.0 947.0 C1466.5 951.0 1463.8 955.1 1464.3 971.4 C1464.7 987.6 1468.8 1032.4 1469.7 1044.6"/><path d="M1467.0 986.3 L1499.5 971.4"/><path d="M1515.8 968.7 L1540.2 968.7"/><path d="M1320.5 1055.4 C1323.7 1053.6 1325.0 1048.4 1339.5 1044.6 C1354.0 1040.8 1389.2 1033.7 1407.3 1032.4 C1425.4 1031.0 1435.8 1032.6 1448.0 1036.5 C1460.2 1040.3 1474.2 1048.2 1480.5 1055.4 C1486.9 1062.7 1486.4 1071.3 1485.9 1079.9 C1485.5 1088.4 1477.8 1094.3 1477.8 1107.0 C1477.8 1119.6 1484.6 1147.7 1485.9 1155.8"/><path d="M1317.8 1058.2 C1319.1 1062.7 1321.0 1074.0 1325.9 1085.3 C1330.9 1096.6 1339.0 1108.8 1347.6 1126.0 C1356.2 1143.1 1369.8 1172.5 1377.5 1188.3 C1385.1 1204.2 1388.8 1211.9 1393.7 1220.9 C1398.7 1229.9 1405.0 1239.0 1407.3 1242.6"/><path d="M1325.9 1066.3 C1330.4 1067.2 1344.5 1072.8 1353.1 1071.7 C1361.6 1070.6 1373.4 1061.5 1377.5 1059.5"/><path d="M1312.4 1039.2 C1311.5 1046.0 1308.8 1067.2 1306.9 1079.9 C1305.1 1092.5 1302.4 1109.2 1301.5 1115.1"/><path d="M1366.6 1040.5 C1368.0 1043.5 1372.5 1051.6 1374.7 1058.2 C1377.0 1064.7 1376.6 1074.4 1380.2 1079.9 C1383.8 1085.3 1391.9 1083.5 1396.4 1090.7 C1401.0 1097.9 1403.2 1116.0 1407.3 1123.3 C1411.4 1130.5 1417.7 1128.7 1420.9 1134.1 C1424.0 1139.5 1422.7 1149.0 1426.3 1155.8 C1429.9 1162.6 1439.4 1167.1 1442.6 1174.8 C1445.7 1182.5 1442.6 1195.1 1445.3 1201.9 C1448.0 1208.7 1455.7 1208.3 1458.8 1215.5 C1462.0 1222.7 1463.3 1240.1 1464.3 1245.0"/><path d="M1366.6 1040.5 C1369.3 1040.8 1377.9 1039.9 1382.9 1041.9 C1387.9 1043.9 1394.2 1050.9 1396.4 1052.7"/><path d="M1373.4 1063.6 C1375.0 1067.2 1379.5 1079.9 1382.9 1085.3 C1386.3 1090.7 1390.6 1089.8 1393.7 1096.1 C1396.9 1102.5 1398.3 1116.5 1401.9 1123.3 C1405.5 1130.0 1412.3 1130.9 1415.4 1136.8 C1418.6 1142.7 1417.2 1151.7 1420.9 1158.5 C1424.5 1165.3 1434.0 1169.8 1437.1 1177.5 C1440.3 1185.2 1437.1 1197.8 1439.8 1204.6 C1442.6 1211.4 1450.2 1211.4 1453.4 1218.2 C1456.6 1224.9 1457.9 1240.6 1458.8 1245.0"/><path d="M1477.8 1055.4 C1479.2 1057.7 1481.4 1062.2 1485.9 1069.0 C1490.5 1075.8 1500.4 1088.4 1504.9 1096.1 C1509.5 1103.8 1512.6 1109.7 1513.1 1115.1 C1513.5 1120.5 1508.6 1126.4 1507.6 1128.7"/><path d="M1477.8 1055.4 C1480.1 1049.6 1485.0 1029.7 1491.4 1020.2 C1497.7 1010.7 1506.3 1005.3 1515.8 998.5 C1525.3 991.7 1540.6 984.3 1548.3 979.5 C1556.0 974.8 1557.8 970.9 1561.9 970.0 C1566.0 969.1 1568.2 971.6 1572.7 974.1 C1577.3 976.6 1585.9 979.5 1589.0 984.9 C1592.2 990.4 1593.1 1001.7 1591.7 1006.6 C1590.4 1011.6 1580.0 1014.3 1580.9 1014.8 C1581.8 1015.2 1592.2 1006.2 1597.2 1009.3 C1602.1 1012.5 1609.8 1027.0 1610.7 1033.7 C1611.6 1040.5 1600.8 1046.0 1602.6 1050.0 C1604.4 1054.1 1617.0 1053.2 1621.6 1058.2 C1626.1 1063.1 1631.5 1073.5 1629.7 1079.9 C1627.9 1086.2 1611.6 1091.6 1610.7 1096.1 C1609.8 1100.7 1622.5 1100.7 1624.3 1107.0 C1626.1 1113.3 1623.4 1128.2 1621.6 1134.1 C1619.8 1140.0 1614.8 1140.9 1613.4 1142.2"/><path d="M1480.5 1050.0 C1484.1 1046.0 1490.9 1036.9 1502.2 1025.6 C1513.5 1014.3 1540.6 989.4 1548.3 982.2"/><path d="M1586.3 1052.7 C1585.9 1057.3 1585.4 1071.3 1583.6 1079.9 C1581.8 1088.4 1581.3 1101.1 1575.5 1104.3 C1569.6 1107.4 1559.2 1100.0 1548.3 1098.8 C1537.5 1097.7 1516.7 1097.7 1510.4 1097.5"/><path d="M1513.1 1128.7 C1518.0 1131.4 1526.6 1140.4 1542.9 1144.9 C1559.2 1149.5 1599.4 1154.0 1610.7 1155.8"/><path d="M1518.5 1139.5 C1524.8 1147.7 1546.1 1174.3 1556.5 1188.3 C1566.9 1202.4 1576.8 1217.7 1580.9 1223.6"/><path d="M1523.9 1172.1 C1529.3 1177.0 1544.7 1197.4 1556.5 1201.9 C1568.2 1206.4 1588.1 1199.6 1594.4 1199.2"/><path d="M1640.0 1079.9 C1636.0 1088.9 1624.2 1116.0 1616.1 1134.1 C1608.1 1152.2 1599.4 1169.9 1591.7 1188.3 C1584.0 1206.8 1573.6 1235.6 1570.0 1245.0"/><path d="M1510.4 1115.1 C1509.5 1122.8 1508.1 1144.5 1504.9 1161.2 C1501.8 1177.9 1495.9 1201.5 1491.4 1215.5 C1486.9 1229.4 1480.1 1240.1 1477.8 1245.0"/><path d="M1485.9 1079.9 C1484.1 1084.4 1474.6 1094.3 1475.1 1107.0 C1475.6 1119.6 1486.4 1147.7 1488.7 1155.8"/><path d="M1231.0 1128.7 C1240.0 1129.8 1265.4 1135.9 1285.2 1135.5 C1305.1 1135.0 1339.5 1127.5 1350.3 1126.0"/><path d="M1231.0 1144.9 C1240.0 1146.5 1264.9 1155.3 1285.2 1154.4 C1305.6 1153.5 1341.7 1142.0 1353.1 1139.5"/><path d="M1266.3 1154.4 L1309.7 1191.1"/><path d="M1288.0 1239.9 L1304.2 1227.7"/><path d="M1296.1 1237.2 L1306.9 1242.6"/><circle cx="1399.2" cy="1052.7" r="2.7"/><circle cx="1412.7" cy="1079.9" r="3.3"/><circle cx="1434.4" cy="1120.5" r="3.3"/><circle cx="1461.5" cy="1161.2" r="3.3"/><circle cx="1477.8" cy="1206.0" r="3.3"/><circle cx="1576.8" cy="1014.8" r="3.3"/><circle cx="1595.8" cy="1052.7" r="3.3"/><circle cx="1608.0" cy="1096.1" r="3.3"/><circle cx="1610.7" cy="1131.4" r="3.3"/><circle cx="1239.1" cy="1139.5" r="9.5"/><circle cx="1256.8" cy="1143.6" r="10.8"/><circle cx="1278.5" cy="1144.9" r="10.3"/><circle cx="1301.5" cy="1143.6" r="10.8"/><circle cx="1324.6" cy="1139.5" r="10.3"/><circle cx="1344.9" cy="1134.1" r="9.5"/><path d="M1120.5 528.3 C1121.0 530.4 1121.4 537.4 1123.5 541.2 C1125.7 545.0 1129.1 549.8 1133.4 551.1 C1137.8 552.5 1145.2 551.5 1149.3 549.1 C1153.5 546.8 1157.1 541.2 1158.3 537.2 C1159.4 533.3 1156.6 527.3 1156.3 525.3"/><path d="M1229.8 498.5 C1230.6 501.3 1232.6 511.4 1234.8 515.4 C1236.9 519.3 1238.4 521.3 1242.7 522.3 C1247.0 523.3 1256.0 523.2 1260.6 521.3 C1265.2 519.5 1268.6 515.7 1270.5 511.4 C1272.5 507.1 1272.2 498.2 1272.5 495.5"/><path d="M1087.8 494.5 C1091.4 493.3 1101.0 489.4 1109.6 487.6 C1118.2 485.7 1131.5 484.1 1139.4 483.6 C1147.4 483.1 1155.6 483.9 1157.3 484.6 C1158.9 485.2 1154.6 486.9 1149.3 487.6 C1144.0 488.2 1129.5 488.4 1125.5 488.5"/><path d="M1211.9 473.6 C1214.7 472.0 1221.0 466.7 1228.8 463.7 C1236.6 460.7 1250.0 457.9 1258.6 455.8 C1267.2 453.6 1276.8 451.6 1280.5 450.8"/><path d="M1240.7 474.6 L1268.6 472.7"/><path d="M1054.0 420.0 C1054.3 429.9 1054.0 459.1 1056.0 479.6 C1057.9 500.1 1061.9 526.6 1065.9 543.2 C1069.9 559.7 1077.5 573.0 1079.8 579.0"/><path d="M1077.8 420.0 C1075.2 428.3 1064.7 453.1 1061.9 469.7 C1059.1 486.2 1061.1 511.1 1060.9 519.3"/><path d="M1121.5 439.9 C1118.5 446.5 1108.3 465.7 1103.6 479.6 C1099.0 493.5 1096.2 510.1 1093.7 523.3 C1091.2 536.6 1089.4 550.8 1088.7 559.1 C1088.1 567.4 1089.6 570.7 1089.7 573.0"/><path d="M1159.3 430.9 C1156.6 437.4 1148.4 458.2 1143.4 469.7 C1138.4 481.1 1133.8 491.9 1129.5 499.5 C1125.2 507.1 1119.5 512.7 1117.6 515.4"/><path d="M1145.4 457.8 L1141.4 507.4"/><path d="M1163.3 509.4 C1165.9 504.1 1172.9 488.5 1179.1 477.6 C1185.4 466.7 1194.7 453.4 1201.0 443.8 C1207.3 434.2 1214.2 424.0 1216.9 420.0"/><path d="M1205.0 505.4 C1206.0 501.1 1209.0 488.9 1210.9 479.6 C1212.9 470.3 1215.6 459.7 1216.9 449.8 C1218.2 439.9 1218.6 425.0 1218.9 420.0"/><path d="M1248.7 420.0 C1248.4 426.6 1248.0 445.8 1246.7 459.7 C1245.4 473.6 1242.1 494.5 1240.7 503.4 C1239.4 512.4 1239.1 511.7 1238.8 513.4"/><path d="M1256.6 420.0 C1258.0 425.0 1262.6 439.9 1264.6 449.8 C1266.6 459.7 1268.2 470.7 1268.6 479.6 C1268.9 488.5 1267.6 496.8 1266.6 503.4 C1265.6 510.1 1263.3 516.7 1262.6 519.3"/><path d="M1286.4 431.9 C1285.8 439.9 1283.8 465.0 1282.5 479.6 C1281.1 494.2 1278.8 509.4 1278.5 519.3 C1278.2 529.3 1280.1 535.9 1280.5 539.2"/><path d="M1304.3 435.9 C1305.0 443.2 1307.6 465.7 1308.3 479.6 C1309.0 493.5 1308.3 512.7 1308.3 519.3"/><path d="M1292.4 420.0 C1295.0 423.3 1303.0 433.2 1308.3 439.9 C1313.6 446.5 1319.2 455.1 1324.2 459.7 C1329.2 464.4 1335.1 461.1 1338.1 467.7 C1341.1 474.3 1342.7 484.2 1342.1 499.5 C1341.4 514.7 1335.4 549.1 1334.1 559.1"/><path d="M1238.8 556.1 C1242.1 553.6 1253.0 547.3 1258.6 541.2 C1264.3 535.1 1269.2 524.6 1272.5 519.3 C1275.8 514.0 1277.5 511.1 1278.5 509.4"/><path d="M1244.7 570.0 C1247.0 571.2 1254.0 577.5 1258.6 577.0 C1263.3 576.5 1268.1 572.8 1272.5 567.0 C1277.0 561.2 1283.3 546.3 1285.4 542.2"/><path d="M1296.4 535.2 C1294.4 542.5 1291.1 567.7 1284.5 579.0 C1277.8 590.2 1266.6 594.5 1256.6 602.8 C1246.7 611.1 1231.8 621.7 1224.8 628.6 C1217.9 635.6 1216.9 635.9 1214.9 644.5 C1212.9 653.1 1213.3 674.2 1212.9 680.1"/><path d="M1308.3 531.3 C1308.6 539.2 1310.9 566.0 1310.3 579.0 C1309.6 591.9 1306.3 602.1 1304.3 608.8 C1302.3 615.4 1302.7 616.4 1298.4 618.7 C1294.1 621.0 1281.8 622.0 1278.5 622.7"/><path d="M1324.2 539.2 C1324.5 545.8 1327.2 565.7 1326.2 579.0 C1325.2 592.2 1321.2 610.1 1318.2 618.7 C1315.2 627.3 1310.0 628.6 1308.3 630.6"/><path d="M1334.1 559.1 C1333.1 564.0 1329.8 582.3 1328.2 588.9 C1326.5 595.5 1324.9 597.2 1324.2 598.8"/><path d="M1063.9 573.0 C1068.2 578.6 1082.8 599.2 1089.7 606.8 C1096.7 614.4 1098.0 614.4 1105.6 618.7 C1113.2 623.0 1126.2 629.0 1135.4 632.6 C1144.7 636.2 1157.0 639.2 1161.3 640.5"/><path d="M1097.7 560.1 C1099.7 560.6 1107.0 560.6 1109.6 563.1 C1112.3 565.5 1113.6 570.0 1113.6 575.0 C1113.6 579.9 1110.3 589.9 1109.6 592.9"/><path d="M1087.8 594.8 C1090.4 596.3 1095.2 602.0 1103.6 603.8 C1112.1 605.6 1131.8 603.3 1138.4 605.8 C1145.0 608.3 1143.1 615.5 1143.4 618.7 C1143.7 621.8 1146.0 624.0 1140.4 624.6 C1134.8 625.3 1118.1 625.0 1109.6 622.7 C1101.2 620.3 1093.0 612.7 1089.7 610.7"/><path d="M1154.3 601.8 C1155.8 605.6 1160.8 618.9 1163.3 624.6 C1165.7 630.4 1168.2 634.6 1169.2 636.6"/><path d="M1161.3 634.6 C1164.2 635.2 1170.5 636.9 1179.1 638.6 C1187.8 640.2 1207.3 643.5 1212.9 644.5"/><path d="M1205.4 601.2 C1205.6 602.4 1205.9 607.3 1207.0 608.4 C1208.1 609.4 1211.4 609.0 1211.9 607.8 C1212.4 606.6 1211.0 602.3 1209.9 601.2 C1208.9 600.1 1206.1 601.2 1205.4 601.2"/><path d="M1252.7 634.6 C1253.0 636.6 1250.3 642.9 1254.6 646.5 C1259.0 650.1 1270.5 654.8 1278.5 656.4 C1286.4 658.1 1297.7 659.4 1302.3 656.4 C1307.0 653.5 1306.3 646.2 1306.3 638.6 C1306.3 630.9 1303.0 615.4 1302.3 610.7"/><path d="M1254.6 634.6 C1257.0 634.3 1264.9 631.3 1268.6 632.6 C1272.2 633.9 1274.8 638.9 1276.5 642.5 C1278.2 646.2 1278.2 652.5 1278.5 654.5"/><path d="M1065.9 648.5 C1068.2 650.1 1074.5 655.1 1079.8 658.4 C1085.1 661.7 1094.7 666.7 1097.7 668.4"/><path d="M1067.9 633.6 C1068.5 636.1 1068.2 643.4 1071.9 648.5 C1075.5 653.6 1082.8 660.7 1089.7 664.4 C1096.7 668.0 1109.6 669.4 1113.6 670.3"/><path d="M1050.0 654.5 L1069.9 648.5"/><path d="M1050.0 608.8 L1054.0 618.7"/><path d="M1090.7 542.2 C1092.2 540.4 1096.5 534.6 1099.7 531.3 C1102.8 528.0 1105.3 524.8 1109.6 522.3 C1113.9 519.8 1120.2 517.9 1125.5 516.4 C1130.8 514.9 1136.4 513.2 1141.4 513.4 C1146.4 513.5 1151.5 515.5 1155.3 517.4 C1159.1 519.2 1164.2 523.8 1164.2 524.3 C1164.2 524.8 1159.4 521.4 1155.3 520.3 C1151.2 519.2 1144.7 517.8 1139.4 517.8 C1134.1 517.8 1128.5 518.6 1123.5 520.3 C1118.5 522.1 1112.9 525.6 1109.6 528.3 C1106.3 530.9 1102.3 532.8 1103.6 536.2 C1105.0 539.7 1116.6 547.3 1117.6 549.1 C1118.5 551.0 1112.6 548.5 1109.6 547.2 C1106.6 545.8 1102.8 542.0 1099.7 541.2 C1096.5 540.4 1092.2 542.0 1090.7 542.2Z" fill="#111" stroke="#111" stroke-width="2.4" stroke-opacity="1"/><path d="M1218.9 513.4 C1219.5 511.7 1220.5 506.8 1222.9 503.4 C1225.2 500.1 1228.5 496.8 1232.8 493.5 C1237.1 490.2 1242.7 485.2 1248.7 483.6 C1254.6 481.9 1261.9 482.3 1268.6 483.6 C1275.2 484.9 1282.6 489.0 1288.4 491.5 C1294.2 494.0 1303.3 497.7 1303.3 498.5 C1303.3 499.3 1291.9 494.0 1288.4 496.5 C1284.9 499.0 1284.1 511.1 1282.5 513.4 C1280.8 515.7 1278.2 513.4 1278.5 510.4 C1278.8 507.4 1286.1 499.1 1284.5 495.5 C1282.8 491.9 1274.5 489.9 1268.6 488.5 C1262.6 487.2 1254.6 486.1 1248.7 487.6 C1242.7 489.0 1237.1 494.2 1232.8 497.5 C1228.5 500.8 1225.2 504.8 1222.9 507.4 C1220.5 510.1 1219.5 512.4 1218.9 513.4Z" fill="#111" stroke="#111" stroke-width="2.4" stroke-opacity="1"/><path d="M1199.0 270.0 L1199.0 281.1"/><path d="M1096.9 315.5 C1100.6 312.7 1111.4 302.9 1119.0 298.6 C1126.6 294.3 1134.8 291.7 1142.4 289.5 C1150.0 287.3 1158.4 286.5 1164.5 285.6 C1170.6 284.7 1174.5 284.3 1178.8 284.3 C1183.1 284.3 1188.6 285.4 1190.5 285.6"/><path d="M1098.2 322.0 C1102.8 319.0 1117.7 308.1 1125.5 303.8 C1133.3 299.5 1139.6 298.2 1145.0 296.0 C1150.4 293.8 1154.1 292.1 1158.0 290.8 C1161.9 289.5 1166.7 288.6 1168.4 288.2"/><path d="M1112.5 303.2 L1129.4 296.7"/><path d="M1115.1 305.8 L1126.8 300.6"/><path d="M1103.4 324.6 L1122.9 309.0"/><path d="M1106.0 327.2 L1119.0 315.5"/><path d="M1139.8 296.7 C1140.9 297.3 1144.8 298.7 1146.3 300.6 C1147.8 302.4 1148.5 306.5 1148.9 307.7"/><path d="M1154.1 302.5 C1155.2 301.3 1158.7 296.8 1160.6 295.4 C1162.6 293.9 1164.9 294.3 1165.8 294.1"/><path d="M1080.0 344.1 C1082.2 341.5 1088.7 332.6 1093.0 328.5 C1097.3 324.4 1101.2 322.2 1106.0 319.4 C1110.8 316.6 1116.8 313.6 1121.6 311.6 C1126.4 309.7 1130.1 308.5 1134.6 307.7 C1139.2 306.9 1146.5 307.2 1148.9 307.1"/><path d="M1152.8 306.4 C1154.1 306.2 1158.0 304.9 1160.6 305.1 C1163.2 305.3 1167.1 307.3 1168.4 307.7"/><path d="M1163.2 295.4 C1168.8 297.2 1187.0 301.5 1197.0 306.4 C1207.0 311.3 1214.3 318.1 1223.0 324.6 C1231.7 331.1 1241.4 337.6 1249.0 345.4 C1256.6 353.2 1262.0 362.3 1268.5 371.4 C1275.0 380.5 1282.6 390.9 1288.0 400.0 C1293.4 409.1 1297.5 419.3 1301.0 426.0 C1304.5 432.7 1305.6 431.5 1308.8 440.2 C1312.1 448.8 1317.2 462.4 1320.5 478.0 C1323.8 493.7 1327.4 524.7 1328.8 534.0"/><path d="M1208.7 311.6 L1228.2 322.0"/><path d="M1169.7 297.3 C1174.3 299.9 1187.0 306.6 1197.0 312.9 C1207.0 319.2 1219.8 327.0 1229.5 335.0 C1239.3 343.0 1247.9 352.3 1255.5 361.0 C1263.1 369.7 1269.2 378.3 1275.0 387.0 C1280.9 395.7 1286.7 404.1 1290.6 413.0 C1294.5 421.9 1296.2 429.3 1298.4 440.2 C1300.6 451.0 1301.9 462.4 1303.6 478.0 C1305.3 493.7 1307.9 524.7 1308.8 534.0"/><path d="M1080.0 366.2 C1081.3 363.6 1083.9 356.5 1087.8 350.6 C1091.7 344.8 1097.1 336.7 1103.4 331.1 C1109.7 325.5 1121.8 319.2 1125.5 316.8"/><path d="M1096.9 394.8 C1100.6 389.2 1111.0 371.0 1119.0 361.0 C1127.0 351.0 1137.4 341.9 1145.0 335.0 C1152.6 328.1 1161.3 322.0 1164.5 319.4"/><path d="M1142.4 390.9 C1144.6 387.0 1150.9 375.3 1155.4 367.5 C1160.0 359.7 1167.3 348.0 1169.7 344.1"/><path d="M1197.0 337.6 C1197.9 343.7 1201.8 362.5 1202.2 374.0 C1202.6 385.5 1201.6 395.5 1199.6 406.5 C1197.7 417.5 1192.0 434.6 1190.5 440.2"/><path d="M1210.0 440.2 L1223.0 401.3 L1236.0 440.2"/><path d="M1247.7 398.7 L1248.4 431.2"/><path d="M1252.9 405.2 L1264.6 439.0"/><path d="M1280.2 383.1 C1282.6 388.1 1290.0 403.5 1294.5 413.0 C1299.1 422.5 1305.3 435.6 1307.5 440.2"/><path d="M1158.0 431.2 L1154.1 440.2"/><path d="M1294.5 328.5 C1295.6 327.4 1297.5 326.0 1301.0 322.0 C1304.5 318.0 1311.8 306.0 1315.3 304.5 C1318.8 302.9 1320.1 307.8 1321.8 312.9 C1323.5 318.0 1325.3 329.2 1325.7 335.0 C1326.1 340.9 1325.3 345.2 1324.4 348.0 C1323.5 350.8 1323.1 352.8 1320.5 351.9 C1317.9 351.0 1312.1 346.1 1308.8 342.8 C1305.6 339.6 1303.4 334.8 1301.0 332.4 C1298.6 330.0 1295.6 329.2 1294.5 328.5"/><path d="M1272.4 323.3 C1273.7 323.1 1276.5 321.1 1280.2 322.0 C1283.9 322.9 1291.0 326.3 1294.5 328.5 C1298.0 330.7 1299.9 330.9 1301.0 335.0 C1302.1 339.1 1302.3 348.0 1301.0 353.2 C1299.7 358.4 1296.2 365.3 1293.2 366.2 C1290.2 367.1 1286.1 362.3 1282.8 358.4 C1279.6 354.5 1275.4 348.7 1273.7 342.8 C1272.0 337.0 1272.6 326.6 1272.4 323.3"/><path d="M1294.5 328.5 C1295.6 328.9 1299.1 329.4 1301.0 331.1 C1303.0 332.8 1305.8 336.1 1306.2 338.9 C1306.6 341.7 1304.0 346.5 1303.6 348.0"/><path d="M1301.0 348.0 C1299.9 351.0 1295.4 361.2 1294.5 366.2 C1293.6 371.2 1295.6 376.0 1295.8 377.9"/><path d="M1303.6 350.6 C1306.0 354.1 1313.4 370.1 1317.9 371.4 C1322.5 372.7 1329.8 361.9 1330.9 358.4 C1332.0 354.9 1325.5 351.9 1324.4 350.6"/><path d="M1308.8 332.4 L1320.5 332.4"/><path d="M1308.8 335.0 L1315.3 340.2"/><path d="M1301.0 335.0 L1293.2 350.6"/><path d="M1286.7 332.4 L1301.0 331.1"/><path d="M1298.4 377.9 C1300.1 377.3 1305.6 373.6 1308.8 374.0 C1312.1 374.4 1316.6 377.0 1317.9 380.5 C1319.2 384.0 1318.1 392.0 1316.6 394.8 C1315.1 397.6 1311.4 398.7 1308.8 397.4 C1306.2 396.1 1302.7 390.3 1301.0 387.0 C1299.3 383.8 1298.8 379.4 1298.4 377.9"/><path d="M1303.0 281.1 C1303.1 283.5 1303.7 289.2 1303.6 296.0 C1303.5 302.8 1302.5 317.7 1302.3 322.0"/><path d="M1325.7 340.2 L1340.0 342.8"/><path d="M1330.9 355.8 L1340.0 353.2"/><path d="M1330.9 361.0 C1331.6 365.3 1333.3 380.5 1334.8 387.0 C1336.3 393.5 1339.1 397.8 1340.0 400.0"/><path d="M1307.5 402.6 C1309.7 404.8 1315.1 412.1 1320.5 415.6 C1325.9 419.1 1336.8 422.1 1340.0 423.4"/><path d="M1262.0 324.6 C1261.6 325.9 1259.0 330.2 1259.4 332.4 C1259.8 334.6 1263.7 336.7 1264.6 337.6"/><circle cx="1202.2" cy="293.4" r="12.0"/><circle cx="1218.5" cy="301.2" r="3.9"/><circle cx="1234.7" cy="308.4" r="13.0"/><circle cx="1252.9" cy="318.8" r="4.2"/><circle cx="1267.2" cy="327.2" r="9.1"/><path d="M1264.4 510.0 C1262.8 515.1 1258.7 532.8 1254.7 540.6 C1250.6 548.3 1242.4 553.8 1240.0 556.5"/><path d="M1282.8 400.0 C1284.8 404.1 1291.5 416.3 1295.0 424.4 C1298.5 432.6 1301.7 440.7 1303.6 448.9 C1305.4 457.0 1305.6 469.3 1306.0 473.3"/><path d="M1303.6 435.5 C1305.2 441.8 1310.5 460.9 1313.3 473.3 C1316.2 485.8 1318.6 496.6 1320.7 510.0 C1322.7 523.5 1324.8 546.7 1325.6 554.0"/><path d="M1372.0 433.0 C1374.5 434.6 1383.4 439.1 1386.7 442.8 C1390.0 446.5 1391.0 449.9 1391.6 455.0 C1392.2 460.1 1392.2 468.9 1390.4 473.3 C1388.5 477.8 1382.2 480.5 1380.6 481.9"/><path d="M1384.3 437.9 C1386.5 441.4 1395.1 454.4 1397.7 458.7 C1400.3 463.0 1399.6 462.8 1400.0 463.6"/><path d="M1370.8 507.6 C1372.4 511.0 1378.5 519.6 1380.6 528.4 C1382.6 537.1 1382.6 554.7 1383.0 560.0"/><path d="M1374.5 510.0 C1376.5 514.1 1384.5 526.1 1386.7 534.5 C1388.9 542.8 1387.7 555.8 1387.9 560.0"/><path d="M1306.0 532.0 L1310.9 560.0"/><path d="M1285.2 541.8 L1270.6 560.0"/><path d="M1307.2 400.0 C1310.3 402.6 1316.4 411.0 1325.6 415.9 C1334.7 420.8 1356.1 427.1 1362.2 429.3"/><path d="M1223.1 935.8 C1224.1 931.5 1226.4 919.2 1229.2 909.8 C1232.0 900.4 1236.3 888.7 1239.9 879.3 C1243.4 869.9 1246.7 860.4 1250.5 853.3 C1254.4 846.2 1257.2 841.9 1262.8 836.5 C1268.4 831.2 1277.0 824.4 1284.2 821.2 C1291.3 818.1 1297.9 818.9 1305.5 817.4 C1313.2 815.9 1322.6 813.0 1330.0 812.1 C1337.4 811.2 1344.0 811.3 1349.8 812.1 C1355.7 812.8 1360.0 813.6 1365.1 816.7 C1370.2 819.7 1376.1 826.3 1380.4 830.4 C1384.7 834.5 1388.5 838.6 1391.1 841.1 C1393.6 843.6 1394.9 844.9 1395.7 845.7"/><path d="M1326.9 812.8 C1329.0 813.0 1334.6 813.5 1339.1 813.6 C1343.7 813.7 1349.3 811.8 1354.4 813.6 C1359.5 815.4 1364.6 820.5 1369.7 824.3 C1374.8 828.1 1380.9 833.2 1385.0 836.5 C1389.0 839.8 1392.3 842.4 1394.1 844.2 C1395.9 845.9 1396.7 846.6 1395.7 847.2 C1394.6 847.8 1389.3 847.8 1388.0 848.0"/><path d="M1337.6 812.8 C1340.9 815.0 1351.6 821.9 1357.5 825.8 C1363.3 829.8 1368.2 833.5 1372.7 836.5 C1377.3 839.6 1382.9 842.9 1385.0 844.2"/><path d="M1357.5 816.7 C1360.0 818.7 1367.7 824.8 1372.7 828.9 C1377.8 833.0 1385.5 839.1 1388.0 841.1"/><path d="M1317.8 818.2 C1320.8 819.2 1330.0 821.7 1336.1 824.3 C1342.2 826.8 1348.3 830.7 1354.4 833.5 C1360.5 836.3 1366.9 838.4 1372.7 841.1 C1378.6 843.8 1387.5 847.7 1389.5 849.5 C1391.6 851.3 1387.8 851.9 1385.0 851.8 C1382.2 851.7 1378.1 850.5 1372.7 848.7 C1367.4 847.0 1359.2 842.9 1352.9 841.1 C1346.5 839.3 1340.9 838.7 1334.6 838.0 C1328.2 837.4 1321.1 837.0 1314.7 837.3 C1308.3 837.5 1303.0 837.9 1296.4 839.6 C1289.8 841.2 1278.6 845.9 1275.0 847.2"/><path d="M1279.6 848.7 C1279.1 853.8 1277.8 868.6 1276.5 879.3 C1275.2 890.0 1272.7 907.3 1271.9 912.9"/><path d="M1325.4 847.2 L1319.3 879.3"/><path d="M1320.8 838.0 C1319.8 839.8 1316.2 840.6 1314.7 848.7 C1313.2 856.9 1310.9 878.5 1311.6 886.9 C1312.4 895.3 1315.2 895.1 1319.3 899.1 C1323.4 903.2 1330.2 908.0 1336.1 911.4 C1341.9 914.7 1348.8 915.7 1354.4 919.0 C1360.0 922.3 1366.4 927.4 1369.7 931.2 C1373.0 935.0 1374.0 939.4 1374.3 941.9 C1374.5 944.5 1374.0 945.5 1371.2 946.5 C1368.4 947.5 1362.3 946.7 1357.5 948.0 C1352.6 949.3 1347.3 953.6 1342.2 954.1 C1337.1 954.6 1332.0 952.1 1326.9 951.1 C1321.8 950.1 1317.2 949.0 1311.6 948.0 C1306.0 947.0 1299.7 943.4 1293.3 945.0 C1287.0 946.5 1279.6 952.6 1273.5 957.2 C1267.3 961.8 1259.5 969.9 1256.7 972.5"/><path d="M1378.9 853.3 L1381.9 868.6"/><path d="M1404.1 889.2 C1401.4 887.8 1393.2 882.5 1388.0 880.8 C1382.8 879.2 1376.8 878.0 1372.7 879.3 C1368.7 880.6 1365.0 884.6 1363.6 888.4 C1362.2 892.3 1362.8 897.9 1364.3 902.2 C1365.9 906.5 1368.8 909.8 1372.7 914.4 C1376.7 919.0 1383.4 925.4 1388.0 929.7 C1392.6 934.0 1395.1 940.9 1400.2 940.4 C1405.3 939.9 1413.0 931.2 1418.6 926.6 C1424.2 922.0 1429.6 917.5 1433.8 912.9 C1438.0 908.3 1442.0 903.5 1443.8 899.1 C1445.5 894.8 1445.7 890.0 1444.5 886.9 C1443.4 883.9 1440.5 882.2 1436.9 880.8 C1433.3 879.4 1427.2 878.0 1423.1 878.5 C1419.1 879.0 1415.6 882.1 1412.5 883.9 C1409.3 885.6 1405.5 888.3 1404.1 889.2"/><path d="M1372.7 948.0 C1375.8 948.0 1387.3 949.0 1391.1 948.0 C1394.9 947.0 1394.1 943.2 1395.7 941.9 C1397.2 940.6 1399.5 940.6 1400.2 940.4"/><path d="M1398.7 868.6 C1400.7 865.3 1406.6 854.8 1410.9 848.7 C1415.3 842.6 1418.8 836.0 1424.7 831.9 C1430.5 827.9 1439.4 826.1 1446.1 824.3 C1452.7 822.5 1456.7 821.7 1464.4 821.2 C1472.0 820.7 1484.2 820.7 1491.9 821.2 C1499.5 821.7 1505.5 823.3 1510.2 824.3 C1514.9 825.3 1518.4 826.8 1520.0 827.3"/><path d="M1403.3 870.1 C1405.8 867.3 1413.5 858.7 1418.6 853.3 C1423.7 848.0 1428.7 842.4 1433.8 838.0 C1438.9 833.7 1446.6 829.1 1449.1 827.3"/><path d="M1412.5 865.5 C1414.7 864.5 1421.4 861.5 1426.2 859.4 C1431.0 857.4 1436.4 855.6 1441.5 853.3 C1446.6 851.0 1451.7 847.5 1456.7 845.7 C1461.8 843.9 1465.7 843.4 1472.0 842.6 C1478.4 841.9 1487.6 841.1 1494.9 841.1 C1502.3 841.1 1512.8 842.4 1516.3 842.6"/><path d="M1438.4 848.7 C1439.7 847.5 1441.7 844.2 1446.1 841.1 C1450.4 838.0 1458.8 833.2 1464.4 830.4 C1470.0 827.6 1477.1 825.3 1479.7 824.3"/><path d="M1465.9 847.2 C1468.2 851.3 1475.8 864.5 1479.7 871.6 C1483.5 878.8 1488.8 883.6 1488.8 890.0 C1488.8 896.3 1484.8 904.2 1479.7 909.8 C1474.6 915.4 1464.1 918.7 1458.3 923.6 C1452.4 928.4 1447.8 933.5 1444.5 938.9 C1441.2 944.2 1438.4 951.6 1438.4 955.7 C1438.4 959.7 1441.5 963.3 1444.5 963.3 C1447.6 963.3 1450.9 959.2 1456.7 955.7 C1462.6 952.1 1469.1 944.5 1479.7 941.9 C1490.2 939.4 1513.3 940.6 1520.0 940.4"/><path d="M1510.2 845.7 L1519.4 890.0"/><path d="M1455.2 851.8 L1479.7 871.6"/><path d="M1426.2 865.5 L1438.4 876.2"/><path d="M1501.0 876.2 L1488.8 890.0"/><path d="M1410.9 780.0 C1413.5 782.5 1421.9 789.7 1426.2 795.3 C1430.5 800.9 1434.6 808.5 1436.9 813.6 C1439.2 818.7 1439.4 823.8 1439.9 825.8"/><path d="M1443.0 810.5 C1446.6 806.2 1458.3 789.7 1464.4 784.6 C1470.5 779.5 1477.1 780.8 1479.7 780.0"/><path d="M1456.7 810.5 L1476.6 787.6"/><path d="M1427.7 795.3 C1430.0 794.3 1438.7 791.7 1441.5 789.2 C1444.3 786.6 1444.0 781.5 1444.5 780.0"/><path d="M1427.7 798.3 C1429.3 798.1 1432.6 797.3 1436.9 796.8 C1441.2 796.3 1450.9 795.5 1453.7 795.3"/><path d="M1487.3 786.1 L1520.0 812.1"/><path d="M1220.0 790.7 C1225.1 793.0 1240.4 800.1 1250.5 804.4 C1260.7 808.8 1273.0 814.4 1281.1 816.7 C1289.2 818.9 1296.4 817.9 1299.4 818.2"/><path d="M1297.9 786.1 L1323.9 807.5"/><path d="M1220.0 838.0 L1226.1 831.9"/><path d="M1385.0 828.9 C1390.1 828.9 1407.4 829.6 1415.5 828.9 C1423.7 828.1 1430.8 825.1 1433.8 824.3"/><path d="M1296.4 975.5 C1306.6 976.0 1334.6 980.1 1357.5 978.6 C1380.4 977.0 1421.1 968.4 1433.8 966.3"/><path d="M1314.7 954.1 L1313.2 979.9"/><path d="M1479.7 941.9 C1477.6 944.5 1469.7 950.8 1467.4 957.2 C1465.2 963.5 1466.2 976.1 1465.9 979.9"/><path d="M1423.1 978.6 L1458.3 963.3"/><path d="M1220.0 917.5 L1226.1 922.0"/><path d="M1224.6 940.4 C1225.3 941.9 1226.1 945.7 1229.2 949.5 C1232.2 953.4 1237.3 960.2 1242.9 963.3 C1248.5 966.3 1258.4 967.9 1262.8 967.9 C1267.1 967.9 1268.6 964.6 1268.9 963.3 C1269.1 962.0 1266.1 960.0 1264.3 960.2 C1262.5 960.5 1259.2 964.1 1258.2 964.8"/><path d="M1256.7 978.6 L1273.5 957.2"/><path d="M1439.9 804.4 C1440.2 806.2 1439.9 811.8 1441.5 815.1 C1443.0 818.4 1447.8 822.8 1449.1 824.3" stroke="#555" stroke-width="2" stroke-opacity="1"/><circle cx="1227.6" cy="812.8" r="8.9"/><circle cx="1242.9" cy="821.2" r="7.6"/><circle cx="1261.2" cy="824.3" r="7.3"/><circle cx="1395.7" cy="838.0" r="5.3"/><circle cx="1408.6" cy="838.0" r="5.3"/><path d="M1164.5 630.5 L1168.9 642.1"/><path d="M1173.2 636.3 C1174.4 639.0 1180.7 648.1 1180.5 652.3 C1180.2 656.4 1176.1 659.8 1171.8 661.0 C1167.4 662.2 1154.6 661.0 1154.4 659.5 C1154.1 658.1 1163.1 653.7 1170.3 652.3 C1177.6 650.8 1191.1 651.0 1197.9 650.8 C1204.7 650.6 1208.8 650.8 1211.0 650.8"/><path d="M1154.4 687.1 L1150.0 684.2"/><path d="M1189.2 685.6 C1187.5 687.8 1181.7 694.8 1179.0 698.7 C1176.4 702.6 1174.2 707.2 1173.2 708.9"/><path d="M1171.8 703.1 L1190.6 685.6"/><path d="M1152.9 723.4 C1154.8 724.8 1161.1 730.9 1164.5 732.1 C1167.9 733.3 1171.3 732.8 1173.2 730.6 C1175.2 728.5 1174.0 720.0 1176.1 719.0 C1178.3 718.1 1177.8 724.0 1186.3 724.8 C1194.8 725.7 1218.5 724.8 1226.9 724.1 C1235.4 723.4 1235.4 721.1 1237.1 720.5"/><path d="M1209.5 662.4 C1210.0 666.0 1210.2 677.7 1212.4 684.2 C1214.6 690.7 1219.0 696.5 1222.6 701.6 C1226.2 706.7 1229.4 709.1 1234.2 714.7 C1239.0 720.2 1248.7 731.6 1251.6 735.0"/><path d="M1218.2 647.9 C1218.7 652.0 1219.7 664.8 1221.1 672.6 C1222.6 680.3 1224.5 687.3 1226.9 694.4 C1229.4 701.4 1232.7 709.4 1235.6 714.7 C1238.5 720.0 1242.9 724.4 1244.4 726.3"/><path d="M1302.4 608.7 C1298.8 610.9 1287.7 617.9 1280.6 621.8 C1273.6 625.6 1267.1 628.3 1260.3 631.9 C1253.5 635.6 1246.0 638.7 1240.0 643.5 C1234.0 648.4 1227.4 655.6 1224.0 661.0 C1220.6 666.3 1220.4 673.1 1219.7 675.5"/><path d="M1266.1 626.1 C1268.1 627.6 1274.1 634.1 1277.7 634.8 C1281.4 635.6 1286.2 631.2 1287.9 630.5"/><path d="M1277.7 621.8 L1285.0 631.9"/><path d="M1305.3 600.0 C1304.8 602.4 1304.4 609.9 1302.4 614.5 C1300.5 619.1 1296.1 624.7 1293.7 627.6 C1291.3 630.5 1288.9 631.2 1287.9 631.9"/><path d="M1306.8 629.0 C1312.1 629.2 1319.8 629.4 1338.7 629.8 C1357.6 630.1 1406.4 631.0 1420.0 631.2"/><path d="M1314.0 629.0 C1323.0 629.3 1350.1 628.3 1367.7 630.5 C1385.4 632.7 1411.3 640.2 1420.0 642.1"/><path d="M1305.3 637.7 C1305.8 640.6 1308.0 648.9 1308.2 655.2 C1308.5 661.5 1307.7 670.2 1306.8 675.5 C1305.8 680.8 1304.4 682.7 1302.4 687.1 C1300.5 691.5 1299.3 698.7 1295.2 701.6 C1291.0 704.5 1280.6 704.0 1277.7 704.5"/><path d="M1306.8 639.2 C1306.0 642.3 1305.6 651.5 1302.4 658.1 C1299.3 664.6 1292.7 673.3 1287.9 678.4 C1283.1 683.5 1277.5 686.1 1273.4 688.5 C1269.3 691.0 1268.8 693.1 1263.2 692.9 C1257.7 692.7 1243.9 684.2 1240.0 687.1 C1236.1 690.0 1239.3 705.5 1240.0 710.3 C1240.7 715.2 1243.6 715.2 1244.4 716.1"/><path d="M1240.0 692.9 C1241.0 693.1 1246.0 691.0 1245.8 694.4 C1245.6 697.7 1239.8 710.1 1238.5 713.2"/><path d="M1277.7 704.5 C1276.3 706.4 1272.7 713.2 1269.0 716.1 C1265.4 719.0 1258.1 721.0 1256.0 721.9"/><path d="M1244.4 716.1 L1258.9 719.0"/><path d="M1295.2 704.5 L1274.8 724.8"/><path d="M1293.7 719.0 C1291.5 720.7 1285.2 726.8 1280.6 729.2 C1276.0 731.6 1271.0 733.1 1266.1 733.5 C1261.3 734.0 1256.4 733.1 1251.6 732.1 C1246.8 731.1 1241.2 729.2 1237.1 727.7 C1233.0 726.3 1228.6 724.1 1226.9 723.4"/><path d="M1305.3 675.5 C1308.5 676.0 1315.2 676.9 1324.2 678.4 C1333.1 679.8 1350.6 682.7 1359.0 684.2 C1367.5 685.6 1364.8 690.7 1375.0 687.1 C1385.2 683.5 1412.5 666.5 1420.0 662.4"/><path d="M1306.8 681.3 C1309.7 682.3 1316.4 683.7 1324.2 687.1 C1331.9 690.5 1344.8 695.6 1353.2 701.6 C1361.7 707.7 1367.7 712.5 1375.0 723.4 C1382.3 734.3 1393.1 759.7 1396.8 766.9"/><path d="M1312.6 690.0 C1315.2 691.5 1323.0 695.6 1328.5 698.7 C1334.1 701.9 1340.6 704.8 1346.0 708.9 C1351.3 713.0 1355.6 717.8 1360.5 723.4 C1365.3 728.9 1368.9 734.8 1375.0 742.3 C1381.0 749.8 1389.3 760.4 1396.8 768.4 C1404.3 776.3 1416.1 786.4 1420.0 790.0"/><path d="M1359.0 684.2 C1362.9 687.1 1372.1 692.7 1382.3 701.6 C1392.4 710.6 1413.7 731.9 1420.0 737.9"/><path d="M1363.4 714.7 L1375.0 739.4"/><path d="M1318.4 646.5 C1321.8 644.8 1332.9 642.6 1338.7 636.3 C1344.5 630.0 1350.8 613.3 1353.2 608.7"/><path d="M1356.1 608.7 L1359.0 626.1"/><path d="M1367.7 607.3 L1375.0 614.5"/><path d="M1370.6 605.8 L1382.3 600.0"/><path d="M1258.9 766.9 L1273.4 771.3"/></g></svg>
</body></html>
